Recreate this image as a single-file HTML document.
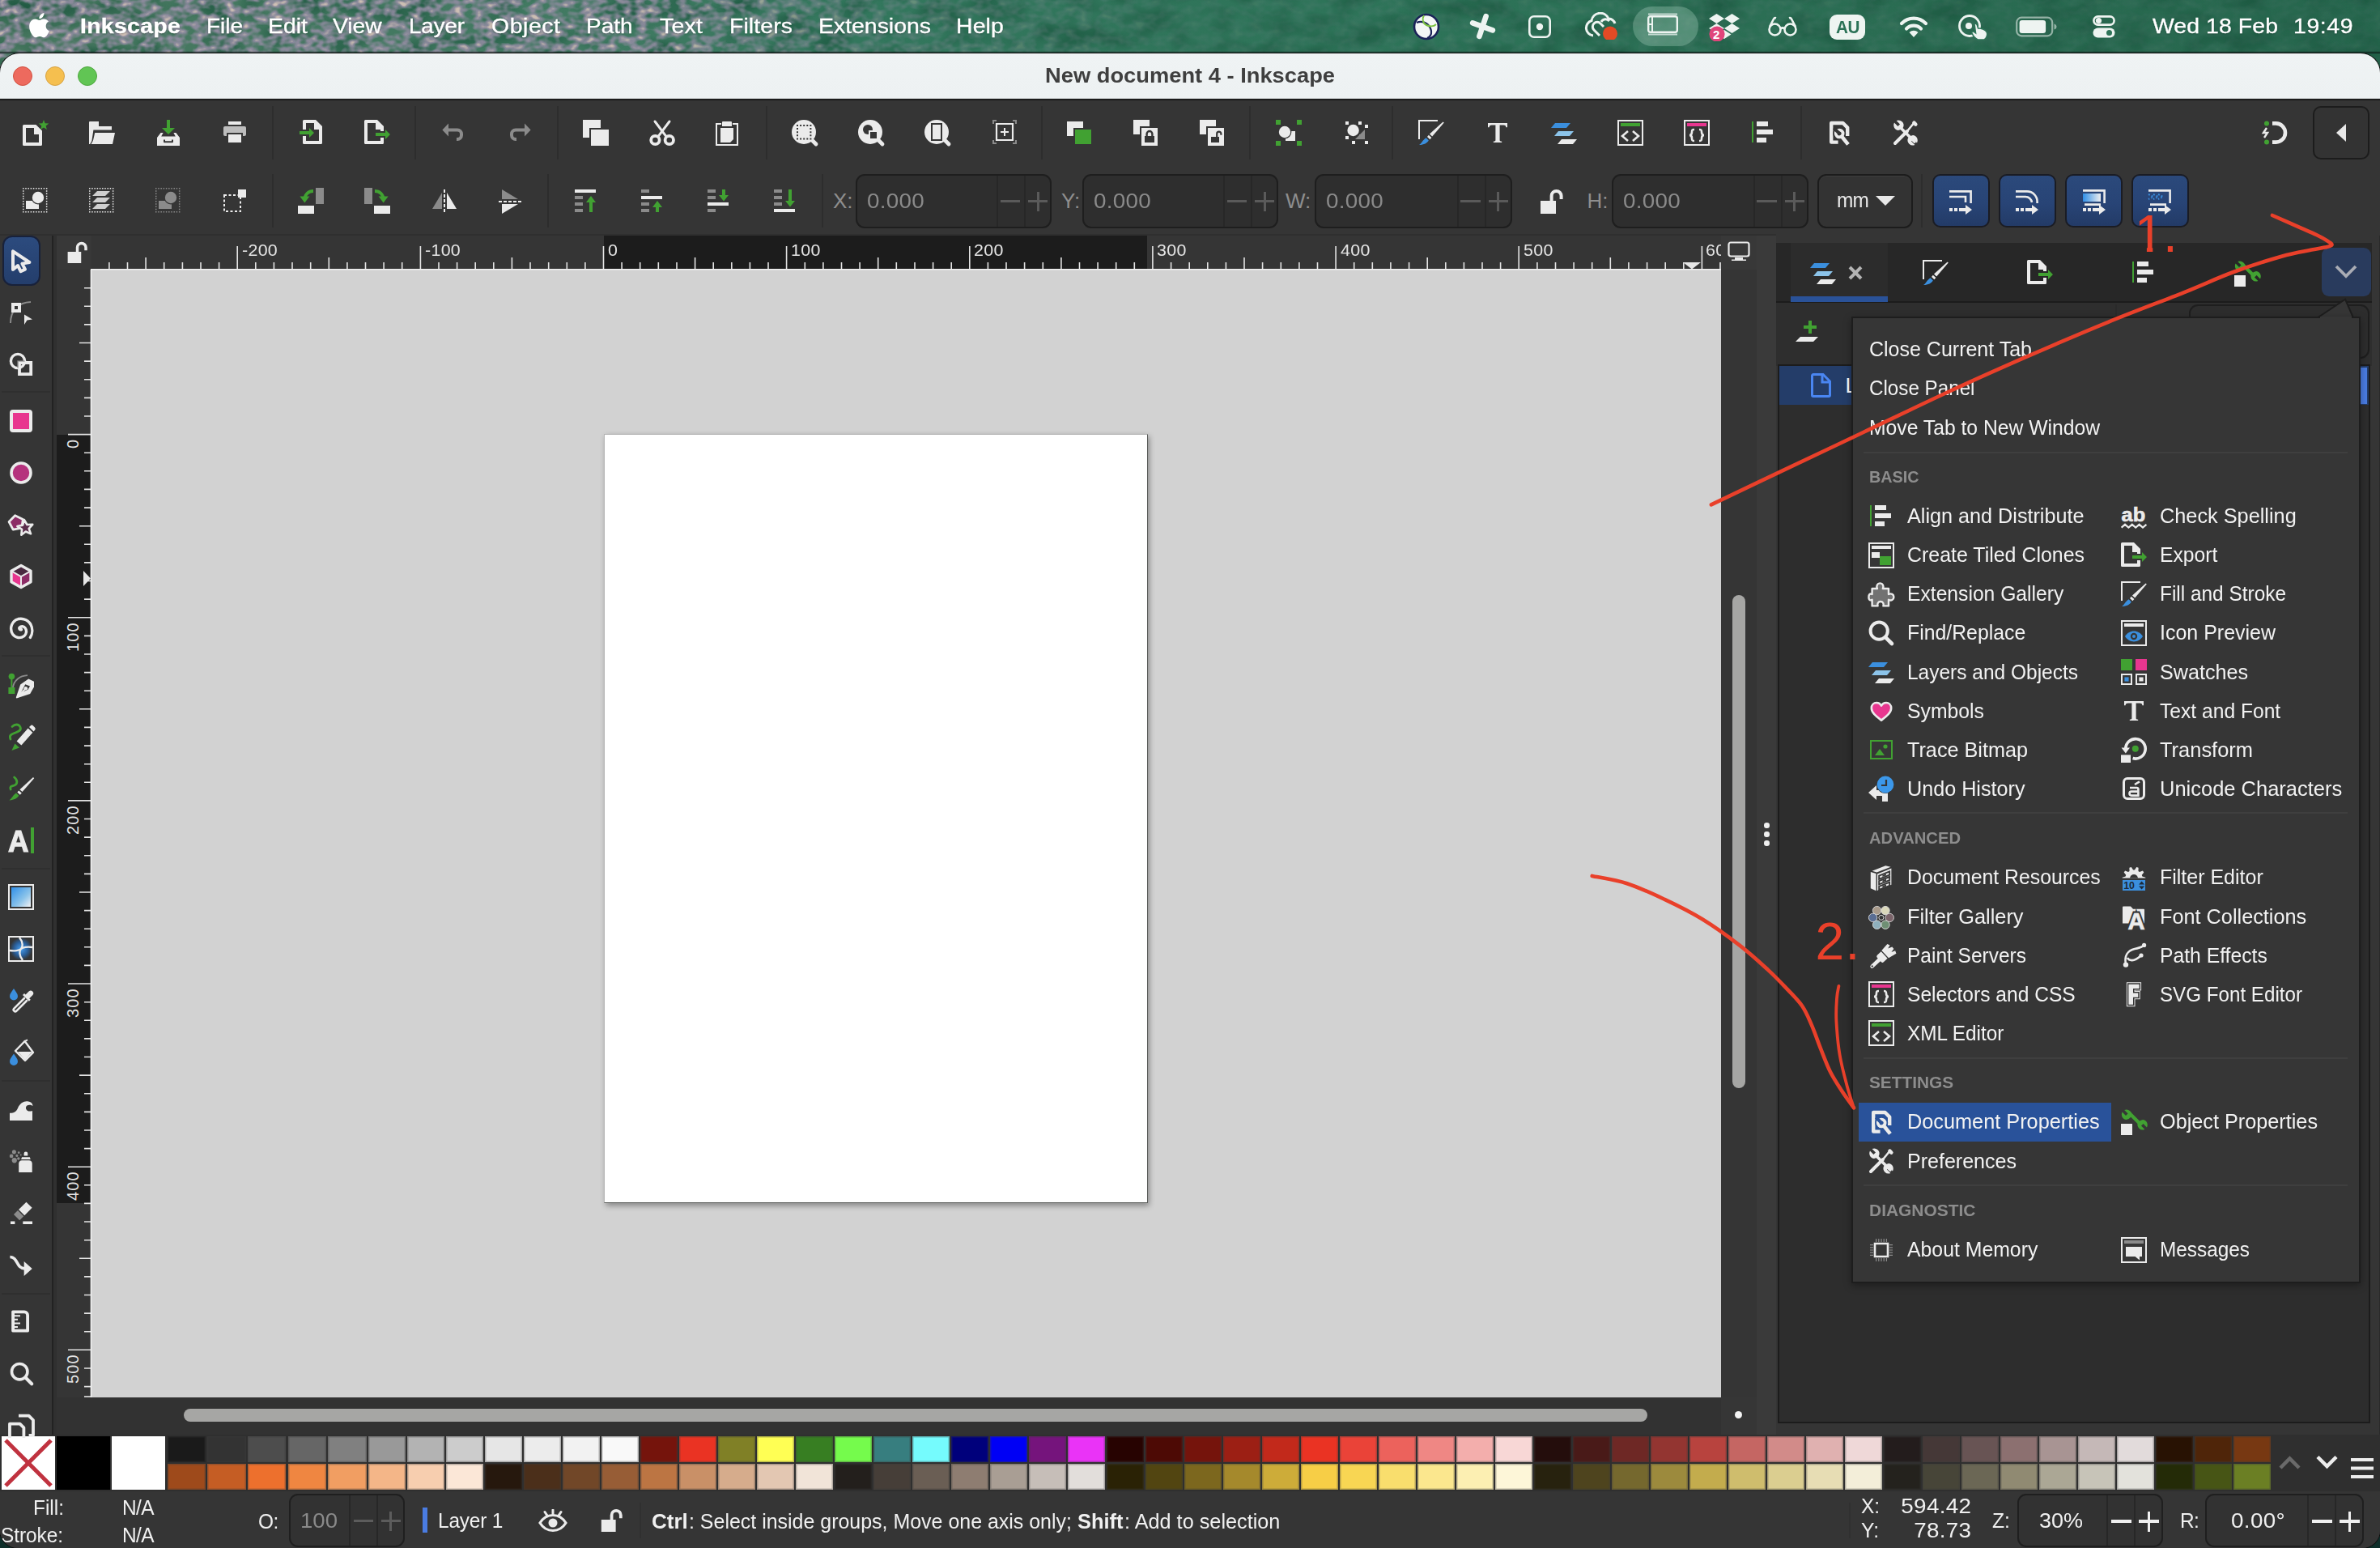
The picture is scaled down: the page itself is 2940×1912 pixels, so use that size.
<!DOCTYPE html>
<html lang="en"><head><meta charset="utf-8"><title>New document 4 - Inkscape</title>
<style>
html,body{margin:0;padding:0;background:#0e2f2a;}
body{width:2940px;height:1912px;overflow:hidden;font-family:"Liberation Sans", sans-serif;}
#root{position:absolute;left:0;top:0;width:2940px;height:1912px;overflow:hidden;}
#root div,#root span,#root svg{position:absolute;box-sizing:border-box;}
.t{white-space:pre;}
.sep{background:#2c2c2c;width:2px;}
.fld{background:#2e2e2e;border:2px solid #1e1e1e;border-radius:11px;}
.fld i{position:absolute;top:0;bottom:0;width:2px;background:#272727;}
</style></head><body>
<div id="root">
<svg width="2940" height="90" style="left:0;top:0" viewBox="0 0 2940 90"><defs><linearGradient id="wg" x1="0" x2="1" y1="0" y2="0"><stop offset="0" stop-color="#47775f"/><stop offset="0.25" stop-color="#417a62"/><stop offset="0.36" stop-color="#33775d"/><stop offset="0.6" stop-color="#2d7358"/><stop offset="0.8" stop-color="#2a6c52"/><stop offset="1" stop-color="#26664d"/></linearGradient><filter id="wn1" x="0" y="0" width="100%" height="100%" color-interpolation-filters="sRGB"><feTurbulence type="fractalNoise" baseFrequency="0.075 0.11" numOctaves="2" seed="11"/><feColorMatrix type="matrix" values="0 0 0 0 0.58  0 0 0 0 0.55  0 0 0 0 0.64  3.6 0 0 0 -1.27"/></filter><filter id="wn2" x="0" y="0" width="100%" height="100%" color-interpolation-filters="sRGB"><feTurbulence type="fractalNoise" baseFrequency="0.075 0.11" numOctaves="2" seed="11"/><feColorMatrix type="matrix" values="0 0 0 0 0.84  0 0 0 0 0.77  0 0 0 0 0.72  6 0 0 0 -3.95"/></filter><filter id="wn3" x="0" y="0" width="100%" height="100%" color-interpolation-filters="sRGB"><feTurbulence type="fractalNoise" baseFrequency="0.02 0.035" numOctaves="2" seed="5"/><feColorMatrix type="matrix" values="0 0 0 0 0.10  0 0 0 0 0.33  0 0 0 0 0.24  2.2 0 0 0 -0.9"/></filter><linearGradient id="wm" x1="0" x2="1"><stop offset="0" stop-color="#fff" stop-opacity="1"/><stop offset="0.27" stop-color="#fff" stop-opacity="0.95"/><stop offset="0.37" stop-color="#fff" stop-opacity="0.35"/><stop offset="0.5" stop-color="#fff" stop-opacity="0.1"/><stop offset="1" stop-color="#fff" stop-opacity="0.06"/></linearGradient><mask id="wmk"><rect width="2940" height="90" fill="url(#wm)"/></mask></defs><rect width="2940" height="90" fill="url(#wg)"/><rect width="2940" height="90" filter="url(#wn3)" opacity="0.8"/><g mask="url(#wmk)"><rect width="2940" height="90" filter="url(#wn1)" opacity="0.9"/><rect width="2940" height="90" filter="url(#wn2)" opacity="0.95"/></g></svg>
<div style="left:0.0px;top:63.0px;width:2940.0px;height:3.0px;background:linear-gradient(#0000,#0b1a16)"></div>
<span class="t " style="left:99.0px;top:15.0px;font-size:26.50px;line-height:34px;color:#fff;font-weight:700;letter-spacing:0.309px;transform:scaleX(1.0700);transform-origin:0 50%;text-shadow:0 1px 2px rgba(0,0,0,.3);-webkit-text-stroke:.35px #fff;">Inkscape</span>
<span class="t " style="left:254.5px;top:15.0px;font-size:26.50px;line-height:34px;color:#fff;letter-spacing:0.000px;transform:scaleX(1.0539);transform-origin:0 50%;text-shadow:0 1px 2px rgba(0,0,0,.3);-webkit-text-stroke:.35px #fff;">File</span>
<span class="t " style="left:331.0px;top:15.0px;font-size:26.50px;line-height:34px;color:#fff;letter-spacing:0.033px;transform:scaleX(1.0700);transform-origin:0 50%;text-shadow:0 1px 2px rgba(0,0,0,.3);-webkit-text-stroke:.35px #fff;">Edit</span>
<span class="t " style="left:411.0px;top:15.0px;font-size:26.50px;line-height:34px;color:#fff;letter-spacing:0.000px;transform:scaleX(1.0622);transform-origin:0 50%;text-shadow:0 1px 2px rgba(0,0,0,.3);-webkit-text-stroke:.35px #fff;">View</span>
<span class="t " style="left:505.0px;top:15.0px;font-size:26.50px;line-height:34px;color:#fff;letter-spacing:0.000px;transform:scaleX(1.0410);transform-origin:0 50%;text-shadow:0 1px 2px rgba(0,0,0,.3);-webkit-text-stroke:.35px #fff;">Layer</span>
<span class="t " style="left:607.0px;top:15.0px;font-size:26.50px;line-height:34px;color:#fff;letter-spacing:0.554px;transform:scaleX(1.0700);transform-origin:0 50%;text-shadow:0 1px 2px rgba(0,0,0,.3);-webkit-text-stroke:.35px #fff;">Object</span>
<span class="t " style="left:724.0px;top:15.0px;font-size:26.50px;line-height:34px;color:#fff;letter-spacing:-0.000px;transform:scaleX(1.0548);transform-origin:0 50%;text-shadow:0 1px 2px rgba(0,0,0,.3);-webkit-text-stroke:.35px #fff;">Path</span>
<span class="t " style="left:815.0px;top:15.0px;font-size:26.50px;line-height:34px;color:#fff;letter-spacing:0.234px;transform:scaleX(1.0700);transform-origin:0 50%;text-shadow:0 1px 2px rgba(0,0,0,.3);-webkit-text-stroke:.35px #fff;">Text</span>
<span class="t " style="left:901.0px;top:15.0px;font-size:26.50px;line-height:34px;color:#fff;letter-spacing:0.109px;transform:scaleX(1.0700);transform-origin:0 50%;text-shadow:0 1px 2px rgba(0,0,0,.3);-webkit-text-stroke:.35px #fff;">Filters</span>
<span class="t " style="left:1011.0px;top:15.0px;font-size:26.50px;line-height:34px;color:#fff;letter-spacing:0.028px;transform:scaleX(1.0700);transform-origin:0 50%;text-shadow:0 1px 2px rgba(0,0,0,.3);-webkit-text-stroke:.35px #fff;">Extensions</span>
<span class="t " style="left:1180.5px;top:15.0px;font-size:26.50px;line-height:34px;color:#fff;letter-spacing:0.160px;transform:scaleX(1.0700);transform-origin:0 50%;text-shadow:0 1px 2px rgba(0,0,0,.3);-webkit-text-stroke:.35px #fff;">Help</span>
<span class="t " style="left:2659.0px;top:15.0px;font-size:26.50px;line-height:34px;color:#fff;letter-spacing:0.100px;transform:scaleX(1.0700);transform-origin:0 50%;text-shadow:0 1px 2px rgba(0,0,0,.3);-webkit-text-stroke:.35px #fff;">Wed 18 Feb</span>
<span class="t " style="left:2832.5px;top:15.0px;font-size:26.50px;line-height:34px;color:#fff;letter-spacing:0.570px;transform:scaleX(1.0700);transform-origin:0 50%;text-shadow:0 1px 2px rgba(0,0,0,.3);-webkit-text-stroke:.35px #fff;">19:49</span>
<div id="win" style="left:0;top:66px;width:2940px;height:1846px;border-radius:24px 24px 22px 22px;background:#353535;overflow:hidden;box-shadow:0 0 0 1px #101010;">
</div>
<div id="w" style="left:0;top:66px;width:2940px;height:1846px;border-radius:24px 24px 22px 22px;overflow:hidden;">
<div id="wi" style="left:0;top:-66px;width:2940px;height:1912px;">
<div style="left:0.0px;top:65.0px;width:2940.0px;height:57.0px;background:linear-gradient(#eff3f4,#edf1f2);border-bottom:1px solid #d0d4d5;"></div>
<div style="left:0.0px;top:122.0px;width:2940.0px;height:2.0px;background:#1b1b1b"></div>
<div style="left:16.0px;top:82.0px;width:24.0px;height:24.0px;border-radius:50%;background:#ed6a5e;border:1px solid #d1503f;"></div>
<div style="left:56.0px;top:82.0px;width:24.0px;height:24.0px;border-radius:50%;background:#f5bf4f;border:1px solid #d6a243;"></div>
<div style="left:96.0px;top:82.0px;width:24.0px;height:24.0px;border-radius:50%;background:#61c554;border:1px solid #4fa73f;"></div>
<span class="t " style="left:1291.0px;top:77.0px;font-size:26.00px;line-height:33px;color:#3f3f3f;font-weight:700;letter-spacing:0.000px;transform:scaleX(1.0500);transform-origin:0 50%;">New document 4 - Inkscape</span>
<div style="left:336.0px;top:131.0px;width:2.0px;height:66.0px;background:#2d2d2d"></div>
<div style="left:512.0px;top:131.0px;width:2.0px;height:66.0px;background:#2d2d2d"></div>
<div style="left:688.0px;top:131.0px;width:2.0px;height:66.0px;background:#2d2d2d"></div>
<div style="left:946.0px;top:131.0px;width:2.0px;height:66.0px;background:#2d2d2d"></div>
<div style="left:1286.0px;top:131.0px;width:2.0px;height:66.0px;background:#2d2d2d"></div>
<div style="left:1543.0px;top:131.0px;width:2.0px;height:66.0px;background:#2d2d2d"></div>
<div style="left:1719.0px;top:131.0px;width:2.0px;height:66.0px;background:#2d2d2d"></div>
<div style="left:2224.0px;top:131.0px;width:2.0px;height:66.0px;background:#2d2d2d"></div>
<div style="left:336.0px;top:215.0px;width:2.0px;height:66.0px;background:#2d2d2d"></div>
<div style="left:676.0px;top:215.0px;width:2.0px;height:66.0px;background:#2d2d2d"></div>
<div style="left:1015.0px;top:215.0px;width:2.0px;height:66.0px;background:#2d2d2d"></div>
<div style="left:2373.0px;top:215.0px;width:2.0px;height:66.0px;background:#2d2d2d"></div>
<span class="t " style="left:1029.0px;top:231.5px;font-size:26.00px;line-height:33px;color:#8e8e8e;">X:</span>
<div style="left:1057.0px;top:214.5px;width:242.0px;height:67.0px;"></div>
<div class="fld" style="left:1057.0px;top:214.5px;width:242.0px;height:67px;"><i style="left:172.0px"></i><i style="left:206.0px"></i></div>
<span class="t " style="left:1071.0px;top:231.5px;font-size:26.00px;line-height:33px;color:#8a8a8a;letter-spacing:0.260px;transform:scaleX(1.0700);transform-origin:0 50%;">0.000</span>
<div style="left:1235.5px;top:247.0px;width:24.5px;height:3.0px;background:#5a5a5a"></div>
<div style="left:1270.0px;top:247.0px;width:24.0px;height:3.0px;background:#5a5a5a"></div>
<div style="left:1280.5px;top:236.5px;width:3.0px;height:24.0px;background:#5a5a5a"></div>
<span class="t " style="left:1311.0px;top:231.5px;font-size:26.00px;line-height:33px;color:#8e8e8e;">Y:</span>
<div style="left:1337.0px;top:214.5px;width:242.0px;height:67.0px;"></div>
<div class="fld" style="left:1337.0px;top:214.5px;width:242.0px;height:67px;"><i style="left:172.0px"></i><i style="left:206.0px"></i></div>
<span class="t " style="left:1351.0px;top:231.5px;font-size:26.00px;line-height:33px;color:#8a8a8a;letter-spacing:0.260px;transform:scaleX(1.0700);transform-origin:0 50%;">0.000</span>
<div style="left:1515.5px;top:247.0px;width:24.5px;height:3.0px;background:#5a5a5a"></div>
<div style="left:1550.0px;top:247.0px;width:24.0px;height:3.0px;background:#5a5a5a"></div>
<div style="left:1560.5px;top:236.5px;width:3.0px;height:24.0px;background:#5a5a5a"></div>
<span class="t " style="left:1588.0px;top:231.5px;font-size:26.00px;line-height:33px;color:#8e8e8e;">W:</span>
<div style="left:1624.0px;top:214.5px;width:243.5px;height:67.0px;"></div>
<div class="fld" style="left:1624.0px;top:214.5px;width:243.5px;height:67px;"><i style="left:173.5px"></i><i style="left:207.5px"></i></div>
<span class="t " style="left:1638.0px;top:231.5px;font-size:26.00px;line-height:33px;color:#8a8a8a;letter-spacing:0.260px;transform:scaleX(1.0700);transform-origin:0 50%;">0.000</span>
<div style="left:1804.0px;top:247.0px;width:24.5px;height:3.0px;background:#5a5a5a"></div>
<div style="left:1838.5px;top:247.0px;width:24.0px;height:3.0px;background:#5a5a5a"></div>
<div style="left:1849.0px;top:236.5px;width:3.0px;height:24.0px;background:#5a5a5a"></div>
<span class="t " style="left:1960.5px;top:231.5px;font-size:26.00px;line-height:33px;color:#8e8e8e;">H:</span>
<div style="left:1990.5px;top:214.5px;width:243.0px;height:67.0px;"></div>
<div class="fld" style="left:1990.5px;top:214.5px;width:243.0px;height:67px;"><i style="left:173.0px"></i><i style="left:207.0px"></i></div>
<span class="t " style="left:2004.5px;top:231.5px;font-size:26.00px;line-height:33px;color:#8a8a8a;letter-spacing:0.260px;transform:scaleX(1.0700);transform-origin:0 50%;">0.000</span>
<div style="left:2170.0px;top:247.0px;width:24.5px;height:3.0px;background:#5a5a5a"></div>
<div style="left:2204.5px;top:247.0px;width:24.0px;height:3.0px;background:#5a5a5a"></div>
<div style="left:2215.0px;top:236.5px;width:3.0px;height:24.0px;background:#5a5a5a"></div>
<div style="left:2245px;top:214.5px;width:118px;height:67px;background:#333;border:2px solid #1c1c1c;border-radius:11px;box-shadow:inset 0 1px 0 #3d3d3d;"></div>
<span class="t " style="left:2268.5px;top:230.5px;font-size:26.00px;line-height:33px;color:#e8e8e8;letter-spacing:-0.913px;transform:scaleX(0.9400);transform-origin:0 50%;">mm</span>
<svg width="26" height="14" style="left:2316px;top:241px" viewBox="0 0 26 14"><path d="M1 1h24L13 13z" fill="#e8e8e8"/></svg>
<div style="left:2386.5px;top:215px;width:71px;height:66px;border-radius:10px;background:linear-gradient(#2b497b,#284476 55%,#233b67);border:2px solid #1a1c24;"></div>
<div style="left:2468.5px;top:215px;width:71px;height:66px;border-radius:10px;background:linear-gradient(#2b497b,#284476 55%,#233b67);border:2px solid #1a1c24;"></div>
<div style="left:2551.0px;top:215px;width:71px;height:66px;border-radius:10px;background:linear-gradient(#2b497b,#284476 55%,#233b67);border:2px solid #1a1c24;"></div>
<div style="left:2632.5px;top:215px;width:71px;height:66px;border-radius:10px;background:linear-gradient(#2b497b,#284476 55%,#233b67);border:2px solid #1a1c24;"></div>
<div style="left:2857px;top:131px;width:70px;height:66px;border-radius:10px;background:#333;border:2px solid #1c1c1c;"></div>
<svg width="14" height="24" style="left:2885px;top:152px" viewBox="0 0 14 24"><path d="M13 1v22L1 12z" fill="#e8e8e8"/></svg>
<div style="left:64.0px;top:291.0px;width:2.0px;height:1485.0px;background:#222"></div>
<div style="left:66.0px;top:291.0px;width:4.0px;height:1485.0px;background:#303030"></div>
<div style="left:2.0px;top:483.0px;width:60.0px;height:2.0px;background:#2f2f2f"></div>
<div style="left:2.0px;top:809.0px;width:60.0px;height:2.0px;background:#2f2f2f"></div>
<div style="left:2.0px;top:1072.0px;width:60.0px;height:2.0px;background:#2f2f2f"></div>
<div style="left:2.0px;top:1334.0px;width:60.0px;height:2.0px;background:#2f2f2f"></div>
<div style="left:2.0px;top:1597.0px;width:60.0px;height:2.0px;background:#2f2f2f"></div>
<div style="left:3px;top:290.500px;width:46.500px;height:62.500px;border-radius:12px;background:linear-gradient(#2c4b7e,#243e6c);border:2px solid #18213a;"></div>
<div style="left:70.0px;top:291.0px;width:2056.0px;height:42.0px;background:#353535"></div>
<div style="left:70.0px;top:291.0px;width:43.0px;height:42.0px;background:#383838"></div>
<div style="left:0.0px;top:289.0px;width:2194.0px;height:2.0px;background:#2f2f2f"></div>
<div style="left:745.5px;top:291.0px;width:671.7px;height:42.0px;background:#1c1c1c"></div>
<div style="left:70.0px;top:333.0px;width:43.0px;height:1393.0px;background:#353535"></div>
<div style="left:70.0px;top:536.6px;width:43.0px;height:949.8px;background:#1c1c1c"></div>
<div style="left:113.0px;top:333.0px;width:2013.0px;height:1393.0px;background:#d2d2d2"></div>
<svg width="2940" height="1912" style="left:0;top:0" viewBox="0 0 2940 1912"><g stroke="#e4e4e4" stroke-width="1.6" fill="none"><path d="M134.9 324V333M157.5 324V333M180.1 318V333M202.7 324V333M225.4 324V333M248.0 324V333M270.6 324V333M293.2 304V333M315.8 324V333M338.4 324V333M361.0 324V333M383.7 324V333M406.3 318V333M428.9 324V333M451.5 324V333M474.1 324V333M496.7 324V333M519.4 304V333M542.0 324V333M564.6 324V333M587.2 324V333M609.8 324V333M632.4 318V333M655.0 324V333M677.7 324V333M700.3 324V333M722.9 324V333M745.5 304V333M768.1 324V333M790.7 324V333M813.3 324V333M836.0 324V333M858.6 318V333M881.2 324V333M903.8 324V333M926.4 324V333M949.0 324V333M971.6 304V333M994.3 324V333M1016.9 324V333M1039.5 324V333M1062.1 324V333M1084.7 318V333M1107.3 324V333M1130.0 324V333M1152.6 324V333M1175.2 324V333M1197.8 304V333M1220.4 324V333M1243.0 324V333M1265.6 324V333M1288.3 324V333M1310.9 318V333M1333.5 324V333M1356.1 324V333M1378.7 324V333M1401.3 324V333M1423.9 304V333M1446.6 324V333M1469.2 324V333M1491.8 324V333M1514.4 324V333M1537.0 318V333M1559.6 324V333M1582.3 324V333M1604.9 324V333M1627.5 324V333M1650.1 304V333M1672.7 324V333M1695.3 324V333M1717.9 324V333M1740.6 324V333M1763.2 318V333M1785.8 324V333M1808.4 324V333M1831.0 324V333M1853.6 324V333M1876.2 304V333M1898.9 324V333M1921.5 324V333M1944.1 324V333M1966.7 324V333M1989.3 318V333M2011.9 324V333M2034.6 324V333M2057.2 324V333M2079.8 324V333M2102.4 304V333M104 355.7H113M104 378.3H113M104 400.9H113M98 423.5H113M104 446.1H113M104 468.8H113M104 491.4H113M104 514.0H113M84 536.6H113M104 559.2H113M104 581.8H113M104 604.4H113M104 627.1H113M98 649.7H113M104 672.3H113M104 694.9H113M104 717.5H113M104 740.1H113M84 762.8H113M104 785.4H113M104 808.0H113M104 830.6H113M104 853.2H113M98 875.8H113M104 898.4H113M104 921.1H113M104 943.7H113M104 966.3H113M84 988.9H113M104 1011.5H113M104 1034.1H113M104 1056.7H113M104 1079.4H113M98 1102.0H113M104 1124.6H113M104 1147.2H113M104 1169.8H113M104 1192.4H113M84 1215.0H113M104 1237.7H113M104 1260.3H113M104 1282.9H113M104 1305.5H113M98 1328.1H113M104 1350.7H113M104 1373.4H113M104 1396.0H113M104 1418.6H113M84 1441.2H113M104 1463.8H113M104 1486.4H113M104 1509.0H113M104 1531.7H113M98 1554.3H113M104 1576.9H113M104 1599.5H113M104 1622.1H113M104 1644.7H113M84 1667.3H113M104 1690.0H113M104 1712.6H113"/></g><path d="M112.5 333V1726M112 332.700H2126M2125 324V333M104 1725H113" stroke="#f0f0f0" stroke-width="1.600" fill="none"/><path d="M2079 324h22l-11 8.500z" fill="#e6e6e6"/><path d="M103 705v19l9 -9.500z" fill="#e6e6e6"/></svg>
<span class="t " style="left:298.7px;top:295.7px;font-size:20.00px;line-height:26px;color:#e4e4e4;letter-spacing:0.281px;transform:scaleX(1.0700);transform-origin:0 50%;">-200</span>
<span class="t " style="left:524.9px;top:295.7px;font-size:20.00px;line-height:26px;color:#e4e4e4;letter-spacing:0.281px;transform:scaleX(1.0700);transform-origin:0 50%;">-100</span>
<span class="t " style="left:751.0px;top:295.7px;font-size:20.00px;line-height:26px;color:#e4e4e4;letter-spacing:0.312px;transform:scaleX(1.0700);transform-origin:0 50%;">0</span>
<span class="t " style="left:977.1px;top:295.7px;font-size:20.00px;line-height:26px;color:#e4e4e4;letter-spacing:0.312px;transform:scaleX(1.0700);transform-origin:0 50%;">100</span>
<span class="t " style="left:1203.3px;top:295.7px;font-size:20.00px;line-height:26px;color:#e4e4e4;letter-spacing:0.312px;transform:scaleX(1.0700);transform-origin:0 50%;">200</span>
<span class="t " style="left:1429.4px;top:295.7px;font-size:20.00px;line-height:26px;color:#e4e4e4;letter-spacing:0.312px;transform:scaleX(1.0700);transform-origin:0 50%;">300</span>
<span class="t " style="left:1655.6px;top:295.7px;font-size:20.00px;line-height:26px;color:#e4e4e4;letter-spacing:0.312px;transform:scaleX(1.0700);transform-origin:0 50%;">400</span>
<span class="t " style="left:1881.8px;top:295.7px;font-size:20.00px;line-height:26px;color:#e4e4e4;letter-spacing:0.312px;transform:scaleX(1.0700);transform-origin:0 50%;">500</span>
<div style="left:2107.4px;top:291px;width:18.6px;height:40px;overflow:hidden;">
<span class="t " style="left:0.0px;top:4.7px;font-size:20.00px;line-height:26px;color:#e4e4e4;letter-spacing:0.312px;transform:scaleX(1.0700);transform-origin:0 50%;">600</span>
</div>
<span class="t" style="left:77.5px;top:553.8px;font-size:20px;line-height:24px;color:#e4e4e4;transform-origin:0 0;transform:rotate(-90deg);letter-spacing:1.11px">0</span>
<span class="t" style="left:77.5px;top:804.5px;font-size:20px;line-height:24px;color:#e4e4e4;transform-origin:0 0;transform:rotate(-90deg);letter-spacing:1.11px">100</span>
<span class="t" style="left:77.5px;top:1030.6px;font-size:20px;line-height:24px;color:#e4e4e4;transform-origin:0 0;transform:rotate(-90deg);letter-spacing:1.11px">200</span>
<span class="t" style="left:77.5px;top:1256.8px;font-size:20px;line-height:24px;color:#e4e4e4;transform-origin:0 0;transform:rotate(-90deg);letter-spacing:1.11px">300</span>
<span class="t" style="left:77.5px;top:1482.9px;font-size:20px;line-height:24px;color:#e4e4e4;transform-origin:0 0;transform:rotate(-90deg);letter-spacing:1.11px">400</span>
<span class="t" style="left:77.5px;top:1709.1px;font-size:20px;line-height:24px;color:#e4e4e4;transform-origin:0 0;transform:rotate(-90deg);letter-spacing:1.11px">500</span>
<div style="left:746.2px;top:536.2px;width:671.6px;height:949.7px;background:#fff;box-shadow:1.500px 3px 7px rgba(0,0,0,.38);border-style:solid;border-color:#b4b4b4 #5c5e5c #5c5e5c #b4b4b4;border-width:1.800px 1.400px 1.400px 1.800px;"></div>
<div style="left:2126.0px;top:291.0px;width:44.0px;height:1485.0px;background:#353535"></div>
<div style="left:2126.0px;top:291.0px;width:44.0px;height:42.0px;background:#383838"></div>
<div style="left:2140.0px;top:735.0px;width:16.0px;height:609.0px;background:#a6a6a4;border-radius:8px"></div>
<div style="left:70.0px;top:1726.0px;width:2100.0px;height:50.0px;background:#323232"></div>
<div style="left:227.0px;top:1740.0px;width:1808.0px;height:16.0px;background:#a6a6a4;border-radius:8px"></div>
<div style="left:2126.0px;top:1726.0px;width:44.0px;height:50.0px;background:#363636"></div>
<div style="left:2143.0px;top:1743.0px;width:9.0px;height:9.0px;background:#f4f4f4;border-radius:50%"></div>
<div style="left:2170.0px;top:291.0px;width:24.0px;height:1485.0px;background:#3a3a3a"></div>
<div style="left:2179.0px;top:1016.0px;width:6.5px;height:6.5px;background:#f0f0f0;border-radius:50%"></div>
<div style="left:2179.0px;top:1027.0px;width:6.5px;height:6.5px;background:#f0f0f0;border-radius:50%"></div>
<div style="left:2179.0px;top:1038.0px;width:6.5px;height:6.5px;background:#f0f0f0;border-radius:50%"></div>
<div style="left:2194.0px;top:291.0px;width:746.0px;height:1485.0px;background:#353535"></div>
<div style="left:2194.0px;top:300.0px;width:736.0px;height:73.0px;background:#272727"></div>
<div style="left:2194.0px;top:372.0px;width:736.0px;height:2.0px;background:#1c1c1c"></div>
<div style="left:2212.0px;top:300.0px;width:120.0px;height:66.0px;background:#2c2c2c"></div>
<div style="left:2212.0px;top:366.0px;width:120.0px;height:7.0px;background:#2a5298"></div>
<div style="left:2194.0px;top:374.0px;width:736.0px;height:78.0px;background:#2e2e2e"></div>
<div style="left:2613.0px;top:376.0px;width:2.0px;height:72.0px;background:#2a2a2a"></div>
<div style="left:2704px;top:376px;width:223px;height:67px;background:#2d2d2d;border:2px solid #1e1e1e;border-radius:11px;"></div>
<div style="left:2196px;top:450px;width:732px;height:1308px;background:#2d2d2d;border:2px solid #1c1c1c;"></div>
<div style="left:2198.0px;top:452.0px;width:728.0px;height:48.0px;background:#243d69"></div>
<div style="left:2916.0px;top:454.0px;width:8.0px;height:44.5px;background:#4a7ce2"></div>
<span class="t " style="left:2279.5px;top:460.0px;font-size:26.00px;line-height:33px;color:#fff;">Layer 1</span>
<div style="left:2867.5px;top:306px;width:61px;height:60px;border-radius:9px;background:#293b5d;"></div>
<svg width="28" height="18" style="left:2884px;top:327px" viewBox="0 0 28 18"><path d="M2 2l12 12L26 2" stroke="#a9acb4" stroke-width="3.800" fill="none"/></svg>
<div style="left:2938.6px;top:291.0px;width:1.4px;height:1481.0px;background:#2a2a2a"></div>
<div style="left:0.0px;top:1772.0px;width:2940.0px;height:70.0px;background:#2f2f2f"></div>
<svg width="66" height="66" style="left:2px;top:1774px" viewBox="0 0 66 66"><rect width="66" height="66" fill="#fff"/><path d="M5 5L61 61M61 5L5 61" stroke="#c0323f" stroke-width="5"/></svg>
<div style="left:70.0px;top:1774.0px;width:66.0px;height:66.0px;background:#000"></div>
<div style="left:138.0px;top:1774.0px;width:66.0px;height:66.0px;background:#fff"></div>
<div style="left:206.7px;top:1774.0px;width:47.6px;height:32.0px;background:#1a1a1a;box-shadow:inset 0 0 0 1.5px rgba(60,60,60,.35)"></div>
<div style="left:206.7px;top:1808.0px;width:47.6px;height:32.0px;background:#9e4a1b;box-shadow:inset 0 0 0 1.5px rgba(60,60,60,.35)"></div>
<div style="left:256.3px;top:1774.0px;width:47.6px;height:32.0px;background:#333333;box-shadow:inset 0 0 0 1.5px rgba(60,60,60,.35)"></div>
<div style="left:256.3px;top:1808.0px;width:47.6px;height:32.0px;background:#c55d24;box-shadow:inset 0 0 0 1.5px rgba(60,60,60,.35)"></div>
<div style="left:305.9px;top:1774.0px;width:47.6px;height:32.0px;background:#4d4d4d;box-shadow:inset 0 0 0 1.5px rgba(60,60,60,.35)"></div>
<div style="left:305.9px;top:1808.0px;width:47.6px;height:32.0px;background:#ed702d;box-shadow:inset 0 0 0 1.5px rgba(60,60,60,.35)"></div>
<div style="left:355.5px;top:1774.0px;width:47.6px;height:32.0px;background:#666666;box-shadow:inset 0 0 0 1.5px rgba(60,60,60,.35)"></div>
<div style="left:355.5px;top:1808.0px;width:47.6px;height:32.0px;background:#ef8641;box-shadow:inset 0 0 0 1.5px rgba(60,60,60,.35)"></div>
<div style="left:405.1px;top:1774.0px;width:47.6px;height:32.0px;background:#808080;box-shadow:inset 0 0 0 1.5px rgba(60,60,60,.35)"></div>
<div style="left:405.1px;top:1808.0px;width:47.6px;height:32.0px;background:#f19e62;box-shadow:inset 0 0 0 1.5px rgba(60,60,60,.35)"></div>
<div style="left:454.7px;top:1774.0px;width:46.0px;height:32.0px;background:#999999;box-shadow:inset 0 0 0 1.5px rgba(60,60,60,.35)"></div>
<div style="left:454.7px;top:1808.0px;width:46.0px;height:32.0px;background:#f4b688;box-shadow:inset 0 0 0 1.5px rgba(60,60,60,.35)"></div>
<div style="left:502.7px;top:1774.0px;width:46.0px;height:32.0px;background:#b3b3b3;box-shadow:inset 0 0 0 1.5px rgba(60,60,60,.35)"></div>
<div style="left:502.7px;top:1808.0px;width:46.0px;height:32.0px;background:#f7ceaf;box-shadow:inset 0 0 0 1.5px rgba(60,60,60,.35)"></div>
<div style="left:550.7px;top:1774.0px;width:46.0px;height:32.0px;background:#cccccc;box-shadow:inset 0 0 0 1.5px rgba(60,60,60,.35)"></div>
<div style="left:550.7px;top:1808.0px;width:46.0px;height:32.0px;background:#fbe7d7;box-shadow:inset 0 0 0 1.5px rgba(60,60,60,.35)"></div>
<div style="left:598.7px;top:1774.0px;width:46.0px;height:32.0px;background:#e6e6e6;box-shadow:inset 0 0 0 1.5px rgba(60,60,60,.35)"></div>
<div style="left:598.7px;top:1808.0px;width:46.0px;height:32.0px;background:#26180d;box-shadow:inset 0 0 0 1.5px rgba(60,60,60,.35)"></div>
<div style="left:646.7px;top:1774.0px;width:46.0px;height:32.0px;background:#ececec;box-shadow:inset 0 0 0 1.5px rgba(60,60,60,.35)"></div>
<div style="left:646.7px;top:1808.0px;width:46.0px;height:32.0px;background:#4b2f1a;box-shadow:inset 0 0 0 1.5px rgba(60,60,60,.35)"></div>
<div style="left:694.7px;top:1774.0px;width:46.0px;height:32.0px;background:#f2f2f2;box-shadow:inset 0 0 0 1.5px rgba(60,60,60,.35)"></div>
<div style="left:694.7px;top:1808.0px;width:46.0px;height:32.0px;background:#714728;box-shadow:inset 0 0 0 1.5px rgba(60,60,60,.35)"></div>
<div style="left:742.7px;top:1774.0px;width:46.0px;height:32.0px;background:#f9f9f9;box-shadow:inset 0 0 0 1.5px rgba(60,60,60,.35)"></div>
<div style="left:742.7px;top:1808.0px;width:46.0px;height:32.0px;background:#975d36;box-shadow:inset 0 0 0 1.5px rgba(60,60,60,.35)"></div>
<div style="left:790.7px;top:1774.0px;width:46.0px;height:32.0px;background:#75140c;box-shadow:inset 0 0 0 1.5px rgba(60,60,60,.35)"></div>
<div style="left:790.7px;top:1808.0px;width:46.0px;height:32.0px;background:#bc7543;box-shadow:inset 0 0 0 1.5px rgba(60,60,60,.35)"></div>
<div style="left:838.7px;top:1774.0px;width:46.0px;height:32.0px;background:#ea3323;box-shadow:inset 0 0 0 1.5px rgba(60,60,60,.35)"></div>
<div style="left:838.7px;top:1808.0px;width:46.0px;height:32.0px;background:#c99067;box-shadow:inset 0 0 0 1.5px rgba(60,60,60,.35)"></div>
<div style="left:886.7px;top:1774.0px;width:46.0px;height:32.0px;background:#808026;box-shadow:inset 0 0 0 1.5px rgba(60,60,60,.35)"></div>
<div style="left:886.7px;top:1808.0px;width:46.0px;height:32.0px;background:#d6ac8c;box-shadow:inset 0 0 0 1.5px rgba(60,60,60,.35)"></div>
<div style="left:934.7px;top:1774.0px;width:46.0px;height:32.0px;background:#ffff54;box-shadow:inset 0 0 0 1.5px rgba(60,60,60,.35)"></div>
<div style="left:934.7px;top:1808.0px;width:46.0px;height:32.0px;background:#e3c7b2;box-shadow:inset 0 0 0 1.5px rgba(60,60,60,.35)"></div>
<div style="left:982.7px;top:1774.0px;width:46.0px;height:32.0px;background:#377e22;box-shadow:inset 0 0 0 1.5px rgba(60,60,60,.35)"></div>
<div style="left:982.7px;top:1808.0px;width:46.0px;height:32.0px;background:#f1e4d8;box-shadow:inset 0 0 0 1.5px rgba(60,60,60,.35)"></div>
<div style="left:1030.7px;top:1774.0px;width:46.0px;height:32.0px;background:#75fb4c;box-shadow:inset 0 0 0 1.5px rgba(60,60,60,.35)"></div>
<div style="left:1030.7px;top:1808.0px;width:46.0px;height:32.0px;background:#231f1c;box-shadow:inset 0 0 0 1.5px rgba(60,60,60,.35)"></div>
<div style="left:1078.7px;top:1774.0px;width:46.0px;height:32.0px;background:#377e7f;box-shadow:inset 0 0 0 1.5px rgba(60,60,60,.35)"></div>
<div style="left:1078.7px;top:1808.0px;width:46.0px;height:32.0px;background:#463e38;box-shadow:inset 0 0 0 1.5px rgba(60,60,60,.35)"></div>
<div style="left:1126.7px;top:1774.0px;width:46.0px;height:32.0px;background:#75fbfd;box-shadow:inset 0 0 0 1.5px rgba(60,60,60,.35)"></div>
<div style="left:1126.7px;top:1808.0px;width:46.0px;height:32.0px;background:#6a5e54;box-shadow:inset 0 0 0 1.5px rgba(60,60,60,.35)"></div>
<div style="left:1174.7px;top:1774.0px;width:46.0px;height:32.0px;background:#00007b;box-shadow:inset 0 0 0 1.5px rgba(60,60,60,.35)"></div>
<div style="left:1174.7px;top:1808.0px;width:46.0px;height:32.0px;background:#8e7d71;box-shadow:inset 0 0 0 1.5px rgba(60,60,60,.35)"></div>
<div style="left:1222.7px;top:1774.0px;width:46.0px;height:32.0px;background:#0000f5;box-shadow:inset 0 0 0 1.5px rgba(60,60,60,.35)"></div>
<div style="left:1222.7px;top:1808.0px;width:46.0px;height:32.0px;background:#a99e94;box-shadow:inset 0 0 0 1.5px rgba(60,60,60,.35)"></div>
<div style="left:1270.7px;top:1774.0px;width:46.0px;height:32.0px;background:#75147c;box-shadow:inset 0 0 0 1.5px rgba(60,60,60,.35)"></div>
<div style="left:1270.7px;top:1808.0px;width:46.0px;height:32.0px;background:#c6beb8;box-shadow:inset 0 0 0 1.5px rgba(60,60,60,.35)"></div>
<div style="left:1318.7px;top:1774.0px;width:46.0px;height:32.0px;background:#ea33f7;box-shadow:inset 0 0 0 1.5px rgba(60,60,60,.35)"></div>
<div style="left:1318.7px;top:1808.0px;width:46.0px;height:32.0px;background:#e2dedb;box-shadow:inset 0 0 0 1.5px rgba(60,60,60,.35)"></div>
<div style="left:1366.7px;top:1774.0px;width:46.0px;height:32.0px;background:#270301;box-shadow:inset 0 0 0 1.5px rgba(60,60,60,.35)"></div>
<div style="left:1366.7px;top:1808.0px;width:46.0px;height:32.0px;background:#2a2205;box-shadow:inset 0 0 0 1.5px rgba(60,60,60,.35)"></div>
<div style="left:1414.7px;top:1774.0px;width:46.0px;height:32.0px;background:#4d0a05;box-shadow:inset 0 0 0 1.5px rgba(60,60,60,.35)"></div>
<div style="left:1414.7px;top:1808.0px;width:46.0px;height:32.0px;background:#524511;box-shadow:inset 0 0 0 1.5px rgba(60,60,60,.35)"></div>
<div style="left:1462.7px;top:1774.0px;width:46.0px;height:32.0px;background:#75140c;box-shadow:inset 0 0 0 1.5px rgba(60,60,60,.35)"></div>
<div style="left:1462.7px;top:1808.0px;width:46.0px;height:32.0px;background:#7c671e;box-shadow:inset 0 0 0 1.5px rgba(60,60,60,.35)"></div>
<div style="left:1510.7px;top:1774.0px;width:46.0px;height:32.0px;background:#9c1f14;box-shadow:inset 0 0 0 1.5px rgba(60,60,60,.35)"></div>
<div style="left:1510.7px;top:1808.0px;width:46.0px;height:32.0px;background:#a5892c;box-shadow:inset 0 0 0 1.5px rgba(60,60,60,.35)"></div>
<div style="left:1558.7px;top:1774.0px;width:46.0px;height:32.0px;background:#c2291b;box-shadow:inset 0 0 0 1.5px rgba(60,60,60,.35)"></div>
<div style="left:1558.7px;top:1808.0px;width:46.0px;height:32.0px;background:#cdac39;box-shadow:inset 0 0 0 1.5px rgba(60,60,60,.35)"></div>
<div style="left:1606.7px;top:1774.0px;width:46.0px;height:32.0px;background:#ea3323;box-shadow:inset 0 0 0 1.5px rgba(60,60,60,.35)"></div>
<div style="left:1606.7px;top:1808.0px;width:46.0px;height:32.0px;background:#f7ce46;box-shadow:inset 0 0 0 1.5px rgba(60,60,60,.35)"></div>
<div style="left:1654.7px;top:1774.0px;width:46.0px;height:32.0px;background:#ea4338;box-shadow:inset 0 0 0 1.5px rgba(60,60,60,.35)"></div>
<div style="left:1654.7px;top:1808.0px;width:46.0px;height:32.0px;background:#f8d653;box-shadow:inset 0 0 0 1.5px rgba(60,60,60,.35)"></div>
<div style="left:1702.7px;top:1774.0px;width:46.0px;height:32.0px;background:#ec625c;box-shadow:inset 0 0 0 1.5px rgba(60,60,60,.35)"></div>
<div style="left:1702.7px;top:1808.0px;width:46.0px;height:32.0px;background:#f9de6d;box-shadow:inset 0 0 0 1.5px rgba(60,60,60,.35)"></div>
<div style="left:1750.7px;top:1774.0px;width:46.0px;height:32.0px;background:#ef8784;box-shadow:inset 0 0 0 1.5px rgba(60,60,60,.35)"></div>
<div style="left:1750.7px;top:1808.0px;width:46.0px;height:32.0px;background:#fbe78e;box-shadow:inset 0 0 0 1.5px rgba(60,60,60,.35)"></div>
<div style="left:1798.7px;top:1774.0px;width:46.0px;height:32.0px;background:#f3aeac;box-shadow:inset 0 0 0 1.5px rgba(60,60,60,.35)"></div>
<div style="left:1798.7px;top:1808.0px;width:46.0px;height:32.0px;background:#fcefb2;box-shadow:inset 0 0 0 1.5px rgba(60,60,60,.35)"></div>
<div style="left:1846.7px;top:1774.0px;width:46.0px;height:32.0px;background:#f8d7d6;box-shadow:inset 0 0 0 1.5px rgba(60,60,60,.35)"></div>
<div style="left:1846.7px;top:1808.0px;width:46.0px;height:32.0px;background:#fdf6d8;box-shadow:inset 0 0 0 1.5px rgba(60,60,60,.35)"></div>
<div style="left:1894.7px;top:1774.0px;width:46.0px;height:32.0px;background:#240d0c;box-shadow:inset 0 0 0 1.5px rgba(60,60,60,.35)"></div>
<div style="left:1894.7px;top:1808.0px;width:46.0px;height:32.0px;background:#27220e;box-shadow:inset 0 0 0 1.5px rgba(60,60,60,.35)"></div>
<div style="left:1942.7px;top:1774.0px;width:46.0px;height:32.0px;background:#491a18;box-shadow:inset 0 0 0 1.5px rgba(60,60,60,.35)"></div>
<div style="left:1942.7px;top:1808.0px;width:46.0px;height:32.0px;background:#4e441e;box-shadow:inset 0 0 0 1.5px rgba(60,60,60,.35)"></div>
<div style="left:1990.7px;top:1774.0px;width:46.0px;height:32.0px;background:#6e2825;box-shadow:inset 0 0 0 1.5px rgba(60,60,60,.35)"></div>
<div style="left:1990.7px;top:1808.0px;width:46.0px;height:32.0px;background:#75682e;box-shadow:inset 0 0 0 1.5px rgba(60,60,60,.35)"></div>
<div style="left:2038.7px;top:1774.0px;width:46.0px;height:32.0px;background:#933531;box-shadow:inset 0 0 0 1.5px rgba(60,60,60,.35)"></div>
<div style="left:2038.7px;top:1808.0px;width:46.0px;height:32.0px;background:#9c8a3d;box-shadow:inset 0 0 0 1.5px rgba(60,60,60,.35)"></div>
<div style="left:2086.7px;top:1774.0px;width:46.0px;height:32.0px;background:#b8433e;box-shadow:inset 0 0 0 1.5px rgba(60,60,60,.35)"></div>
<div style="left:2086.7px;top:1808.0px;width:46.0px;height:32.0px;background:#c3ac4d;box-shadow:inset 0 0 0 1.5px rgba(60,60,60,.35)"></div>
<div style="left:2134.7px;top:1774.0px;width:46.0px;height:32.0px;background:#c56663;box-shadow:inset 0 0 0 1.5px rgba(60,60,60,.35)"></div>
<div style="left:2134.7px;top:1808.0px;width:46.0px;height:32.0px;background:#cfbd6d;box-shadow:inset 0 0 0 1.5px rgba(60,60,60,.35)"></div>
<div style="left:2182.7px;top:1774.0px;width:46.0px;height:32.0px;background:#d28b89;box-shadow:inset 0 0 0 1.5px rgba(60,60,60,.35)"></div>
<div style="left:2182.7px;top:1808.0px;width:46.0px;height:32.0px;background:#dbce90;box-shadow:inset 0 0 0 1.5px rgba(60,60,60,.35)"></div>
<div style="left:2230.7px;top:1774.0px;width:46.0px;height:32.0px;background:#e0b1b0;box-shadow:inset 0 0 0 1.5px rgba(60,60,60,.35)"></div>
<div style="left:2230.7px;top:1808.0px;width:46.0px;height:32.0px;background:#e7ddb4;box-shadow:inset 0 0 0 1.5px rgba(60,60,60,.35)"></div>
<div style="left:2278.7px;top:1774.0px;width:46.0px;height:32.0px;background:#efd8d8;box-shadow:inset 0 0 0 1.5px rgba(60,60,60,.35)"></div>
<div style="left:2278.7px;top:1808.0px;width:46.0px;height:32.0px;background:#f3eed9;box-shadow:inset 0 0 0 1.5px rgba(60,60,60,.35)"></div>
<div style="left:2326.7px;top:1774.0px;width:46.0px;height:32.0px;background:#231c1c;box-shadow:inset 0 0 0 1.5px rgba(60,60,60,.35)"></div>
<div style="left:2326.7px;top:1808.0px;width:46.0px;height:32.0px;background:#24221d;box-shadow:inset 0 0 0 1.5px rgba(60,60,60,.35)"></div>
<div style="left:2374.7px;top:1774.0px;width:46.0px;height:32.0px;background:#453837;box-shadow:inset 0 0 0 1.5px rgba(60,60,60,.35)"></div>
<div style="left:2374.7px;top:1808.0px;width:46.0px;height:32.0px;background:#474538;box-shadow:inset 0 0 0 1.5px rgba(60,60,60,.35)"></div>
<div style="left:2422.7px;top:1774.0px;width:46.0px;height:32.0px;background:#685454;box-shadow:inset 0 0 0 1.5px rgba(60,60,60,.35)"></div>
<div style="left:2422.7px;top:1808.0px;width:46.0px;height:32.0px;background:#6b6755;box-shadow:inset 0 0 0 1.5px rgba(60,60,60,.35)"></div>
<div style="left:2470.7px;top:1774.0px;width:46.0px;height:32.0px;background:#8c7070;box-shadow:inset 0 0 0 1.5px rgba(60,60,60,.35)"></div>
<div style="left:2470.7px;top:1808.0px;width:46.0px;height:32.0px;background:#908a72;box-shadow:inset 0 0 0 1.5px rgba(60,60,60,.35)"></div>
<div style="left:2518.7px;top:1774.0px;width:46.0px;height:32.0px;background:#a89493;box-shadow:inset 0 0 0 1.5px rgba(60,60,60,.35)"></div>
<div style="left:2518.7px;top:1808.0px;width:46.0px;height:32.0px;background:#aba795;box-shadow:inset 0 0 0 1.5px rgba(60,60,60,.35)"></div>
<div style="left:2566.7px;top:1774.0px;width:46.0px;height:32.0px;background:#c5b8b7;box-shadow:inset 0 0 0 1.5px rgba(60,60,60,.35)"></div>
<div style="left:2566.7px;top:1808.0px;width:46.0px;height:32.0px;background:#c7c4b8;box-shadow:inset 0 0 0 1.5px rgba(60,60,60,.35)"></div>
<div style="left:2614.7px;top:1774.0px;width:46.0px;height:32.0px;background:#e2dbdb;box-shadow:inset 0 0 0 1.5px rgba(60,60,60,.35)"></div>
<div style="left:2614.7px;top:1808.0px;width:46.0px;height:32.0px;background:#e3e2dc;box-shadow:inset 0 0 0 1.5px rgba(60,60,60,.35)"></div>
<div style="left:2662.7px;top:1774.0px;width:46.0px;height:32.0px;background:#281203;box-shadow:inset 0 0 0 1.5px rgba(60,60,60,.35)"></div>
<div style="left:2662.7px;top:1808.0px;width:46.0px;height:32.0px;background:#242b07;box-shadow:inset 0 0 0 1.5px rgba(60,60,60,.35)"></div>
<div style="left:2710.7px;top:1774.0px;width:46.0px;height:32.0px;background:#4f2509;box-shadow:inset 0 0 0 1.5px rgba(60,60,60,.35)"></div>
<div style="left:2710.7px;top:1808.0px;width:46.0px;height:32.0px;background:#475515;box-shadow:inset 0 0 0 1.5px rgba(60,60,60,.35)"></div>
<div style="left:2758.7px;top:1774.0px;width:46.0px;height:32.0px;background:#773812;box-shadow:inset 0 0 0 1.5px rgba(60,60,60,.35)"></div>
<div style="left:2758.7px;top:1808.0px;width:46.0px;height:32.0px;background:#6b7f24;box-shadow:inset 0 0 0 1.5px rgba(60,60,60,.35)"></div>
<svg width="130" height="66" style="left:2810px;top:1774px" viewBox="0 0 130 66"><path d="M7 39l11.500 -11.500l11.500 11.500" stroke="#6a6a6a" stroke-width="4.500" fill="none"/><path d="M53 25.500l11.500 11.500l11.500 -11.500" stroke="#ededed" stroke-width="4.500" fill="none"/><path d="M94 29h28M94 39.500h28M94 50h28" stroke="#ededed" stroke-width="4" fill="none"/></svg>
<div style="left:0.0px;top:1842.0px;width:2940.0px;height:70.0px;background:#353535"></div>
<span class="t " style="left:40.5px;top:1846.0px;font-size:26.00px;line-height:33px;color:#f0f0f0;letter-spacing:-0.002px;transform:scaleX(0.9400);transform-origin:0 50%;">Fill:</span>
<span class="t " style="left:0.5px;top:1879.5px;font-size:26.00px;line-height:33px;color:#f0f0f0;letter-spacing:-0.064px;transform:scaleX(0.9400);transform-origin:0 50%;">Stroke:</span>
<span class="t " style="left:150.5px;top:1846.0px;font-size:26.00px;line-height:33px;color:#f0f0f0;letter-spacing:-0.618px;transform:scaleX(0.9400);transform-origin:0 50%;">N/A</span>
<span class="t " style="left:150.5px;top:1879.5px;font-size:26.00px;line-height:33px;color:#f0f0f0;letter-spacing:-0.618px;transform:scaleX(0.9400);transform-origin:0 50%;">N/A</span>
<span class="t " style="left:318.5px;top:1862.5px;font-size:26.00px;line-height:33px;color:#f0f0f0;letter-spacing:-0.425px;transform:scaleX(0.9400);transform-origin:0 50%;">O:</span>
<div class="fld" style="left:357px;top:1845px;width:143px;height:66px;background:#323232;border-color:#1f1f1f"><i style="left:72px"></i><i style="left:106px"></i></div>
<span class="t " style="left:371.0px;top:1861.5px;font-size:26.00px;line-height:33px;color:#8a8a8a;letter-spacing:0.000px;transform:scaleX(1.0605);transform-origin:0 50%;">100</span>
<div style="left:437.0px;top:1877.0px;width:24.0px;height:3.0px;background:#5c5c5c"></div>
<div style="left:470.5px;top:1877.0px;width:24.0px;height:3.0px;background:#5c5c5c"></div>
<div style="left:481.0px;top:1866.5px;width:3.0px;height:24.0px;background:#5c5c5c"></div>
<div style="left:522.0px;top:1862.0px;width:6.0px;height:31.0px;background:#4a7ce2"></div>
<span class="t " style="left:541.0px;top:1862.0px;font-size:26.00px;line-height:33px;color:#f0f0f0;letter-spacing:-0.230px;transform:scaleX(0.9400);transform-origin:0 50%;">Layer 1</span>
<div style="left:790.0px;top:1856.0px;width:2.0px;height:44.0px;background:#303030"></div>
<span class="t " style="left:804.7px;top:1862.7px;font-size:25.50px;line-height:33px;color:#f0f0f0;font-weight:700;letter-spacing:0.000px;transform:scaleX(1.0201);transform-origin:0 50%;">Ctrl</span>
<span class="t " style="left:850.6px;top:1862.7px;font-size:25.50px;line-height:33px;color:#f0f0f0;letter-spacing:0.000px;transform:scaleX(0.9785);transform-origin:0 50%;">: Select inside groups, Move one axis only;</span>
<span class="t " style="left:1330.6px;top:1862.7px;font-size:25.50px;line-height:33px;color:#f0f0f0;font-weight:700;letter-spacing:0.000px;transform:scaleX(0.9974);transform-origin:0 50%;">Shift</span>
<span class="t " style="left:1388.8px;top:1862.7px;font-size:25.50px;line-height:33px;color:#f0f0f0;letter-spacing:0.000px;transform:scaleX(0.9907);transform-origin:0 50%;">: Add to selection</span>
<div style="left:2284.0px;top:1856.0px;width:2.0px;height:44.0px;background:#303030"></div>
<span class="t " style="left:2298.5px;top:1843.5px;font-size:26.00px;line-height:33px;color:#f0f0f0;letter-spacing:-0.049px;transform:scaleX(0.9400);transform-origin:0 50%;">X:</span>
<span class="t " style="left:2298.5px;top:1873.5px;font-size:26.00px;line-height:33px;color:#f0f0f0;letter-spacing:0.000px;transform:scaleX(0.9511);transform-origin:0 50%;">Y:</span>
<span class="t " style="right:505.0px;top:1843.5px;font-size:26.00px;line-height:33px;color:#f0f0f0;letter-spacing:0.299px;transform:scaleX(1.0700);transform-origin:100% 50%;">594.42</span>
<span class="t " style="right:505.0px;top:1873.5px;font-size:26.00px;line-height:33px;color:#f0f0f0;letter-spacing:0.260px;transform:scaleX(1.0700);transform-origin:100% 50%;">78.73</span>
<span class="t " style="left:2460.5px;top:1862.0px;font-size:26.00px;line-height:33px;color:#f0f0f0;letter-spacing:0.000px;transform:scaleX(0.9522);transform-origin:0 50%;">Z:</span>
<div class="fld" style="left:2492px;top:1845px;width:180px;height:66px;background:#323232;border-color:#1f1f1f"><i style="left:108px"></i><i style="left:142px"></i></div>
<span class="t " style="left:2518.5px;top:1861.5px;font-size:26.00px;line-height:33px;color:#f0f0f0;letter-spacing:0.000px;transform:scaleX(1.0377);transform-origin:0 50%;">30%</span>
<div style="left:2608.0px;top:1877.0px;width:25.0px;height:3.5px;background:#f0f0f0"></div>
<div style="left:2642.0px;top:1877.0px;width:25.0px;height:3.5px;background:#f0f0f0"></div>
<div style="left:2652.7px;top:1866.5px;width:3.5px;height:25.0px;background:#f0f0f0"></div>
<span class="t " style="left:2692.5px;top:1862.0px;font-size:26.00px;line-height:33px;color:#f0f0f0;letter-spacing:-0.766px;transform:scaleX(0.9400);transform-origin:0 50%;">R:</span>
<div class="fld" style="left:2724px;top:1845px;width:196px;height:66px;background:#323232;border-color:#1f1f1f"><i style="left:124px"></i><i style="left:158px"></i></div>
<span class="t " style="left:2756.0px;top:1861.5px;font-size:26.00px;line-height:33px;color:#f0f0f0;letter-spacing:0.324px;transform:scaleX(1.0700);transform-origin:0 50%;">0.00°</span>
<div style="left:2856.0px;top:1877.0px;width:25.0px;height:3.5px;background:#f0f0f0"></div>
<div style="left:2890.0px;top:1877.0px;width:25.0px;height:3.5px;background:#f0f0f0"></div>
<div style="left:2900.7px;top:1866.5px;width:3.5px;height:25.0px;background:#f0f0f0"></div>
<svg width="32" height="32" viewBox="0 0 16 16" style="left:28px;top:148px;overflow:visible;"><path fill-rule="evenodd" fill="#ebebeb" d="M.8 3h7.4L12 6.8V15.2a.8 .8 0 0 1 -.8 .8H.8a.8 .8 0 0 1 -.8 -.8V3.8A.8 .8 0 0 1 .8 3zM2 5v9h8V9H7V5z"/><polygon points="13.00,0.00 13.82,2.17 16.14,2.28 14.33,3.73 14.94,5.97 13.00,4.70 11.06,5.97 11.67,3.73 9.86,2.28 12.18,2.17" fill="#41a132"/></svg>
<svg width="32" height="32" viewBox="0 0 16 16" style="left:110px;top:148px;overflow:visible;"><path fill="#ebebeb" d="M0 1.5a.5 .5 0 0 1 .5 -.5H6v3h8v2.3H2.7L1.7 13 0.6 15H0z"/><path fill="#ebebeb" d="M3.6 8H16l-1.5 7H1.3l1.2-2.2z"/></svg>
<svg width="32" height="32" viewBox="0 0 16 16" style="left:192px;top:148px;overflow:visible;"><path fill="#41a132" d="M7 0h2v5h3L8 9 4 5h3z"/><path fill-rule="evenodd" fill="#ebebeb" d="M3.3 8h1.5L3.6 10.3H12.4L11.2 8h1.5L15 11v5H1v-5zM5 12.3v1.3a.5 .5 0 0 0 .5 .5h5a.5 .5 0 0 0 .5 -.5v-1.3h-1v.8H6v-.8z"/></svg>
<svg width="32" height="32" viewBox="0 0 16 16" style="left:274px;top:148px;overflow:visible;"><path fill="#ebebeb" d="M4 1h8v2H4z"/><path fill="#bdbdbd" d="M2 4h12a1 1 0 0 1 1 1v4a1 1 0 0 1 -1 1H2a1 1 0 0 1 -1 -1V5a1 1 0 0 1 1 -1z"/><path fill="#353535" stroke="#353535" stroke-width="1" d="M3.5 8.5h9v6h-9z"/><path fill="#ebebeb" d="M4 9h8v5H4z"/></svg>
<svg width="32" height="32" viewBox="0 0 16 16" style="left:368px;top:148px;overflow:visible;"><path fill-rule="evenodd" fill="#ebebeb" d="M3.8 0H11l4 4v10.2a.8 .8 0 0 1 -.8 .8H3.8a.8 .8 0 0 1 -.8 -.8V10h2v3h8V6h-3V2H5v4H3V.8A.8 .8 0 0 1 3.800 0z"/><path fill="#41a132" d="M1 7h6V5l3 3-3 3V9H1z"/></svg>
<svg width="32" height="32" viewBox="0 0 16 16" style="left:450px;top:148px;overflow:visible;"><path fill-rule="evenodd" fill="#ebebeb" d="M.8 0H8l4 4v3h-2V6H7V2H2v11h8v-2h2v3.200a.8 .8 0 0 1 -.8 .8H.8a.8 .8 0 0 1 -.8 -.8V.8A.8 .8 0 0 1 .8 0z"/><path fill="#41a132" d="M7 8h6V6l3 3-3 3v-2H7z"/></svg>
<svg width="32" height="32" viewBox="0 0 16 16" style="left:544px;top:148px;overflow:visible;"><path fill="#8b8b8b" d="M5 2.200v3h5.500a3.500 3.500 0 0 1 3.500 3.500v.8a3.500 3.500 0 0 1 -3.500 3.500H10v-2h.5a1.500 1.500 0 0 0 1.500 -1.500v-.8a1.500 1.500 0 0 0 -1.500 -1.500H5v3L1.200 6.200z"/></svg>
<svg width="32" height="32" viewBox="0 0 16 16" style="left:626px;top:148px;overflow:visible;"><g transform="translate(16 0) scale(-1 1)"><path fill="#8b8b8b" d="M5 2.200v3h5.500a3.500 3.500 0 0 1 3.500 3.500v.8a3.500 3.500 0 0 1 -3.500 3.500H10v-2h.5a1.500 1.500 0 0 0 1.500 -1.500v-.8a1.500 1.500 0 0 0 -1.500 -1.500H5v3L1.200 6.200z"/></g></svg>
<svg width="32" height="32" viewBox="0 0 16 16" style="left:720px;top:148px;overflow:visible;"><path fill="#ebebeb" d="M0 0h11v5H4v6H0z"/><path fill="#ebebeb" d="M5 6h11v10H5z"/></svg>
<svg width="32" height="32" viewBox="0 0 16 16" style="left:802px;top:148px;overflow:visible;"><g fill="none" stroke="#ebebeb"><path stroke-width="1.500" stroke-linecap="round" d="M3.500 1L10.600 10.400M12.500 1L5.400 10.400"/><circle cx="3.700" cy="12.500" r="2.600" stroke-width="1.900"/><circle cx="12.400" cy="12.500" r="2.600" stroke-width="1.900"/></g></svg>
<svg width="32" height="32" viewBox="0 0 16 16" style="left:884px;top:148px;overflow:visible;"><path fill-rule="evenodd" fill="#ebebeb" d="M0 2h3.500v1H1v12h12V3h-2.500V2H14v14H0z"/><path fill="#ebebeb" d="M4.500 1h5a.5 .5 0 0 1 .5 .5V4H4V1.500a.5 .5 0 0 1 .5 -.5z"/><path fill="#ebebeb" d="M3 5h8v7l-2 2H3z"/></svg>
<svg width="32" height="32" viewBox="0 0 16 16" style="left:978px;top:148px;overflow:visible;"><circle cx="7.500" cy="7.500" r="7.500" fill="#ebebeb"/><path d="M12.500 12.500L15 15" stroke="#ebebeb" stroke-width="2.400" stroke-linecap="round"/><path d="M3.00 3.00h1.00v1.00h-1.00zM3.00 11.20h1.00v1.00h-1.00zM5.05 3.00h1.00v1.00h-1.00zM5.05 11.20h1.00v1.00h-1.00zM7.10 3.00h1.00v1.00h-1.00zM7.10 11.20h1.00v1.00h-1.00zM9.15 3.00h1.00v1.00h-1.00zM9.15 11.20h1.00v1.00h-1.00zM11.20 3.00h1.00v1.00h-1.00zM11.20 11.20h1.00v1.00h-1.00zM3.00 5.05h1.00v1.00h-1.00zM11.20 5.05h1.00v1.00h-1.00zM3.00 7.10h1.00v1.00h-1.00zM11.20 7.10h1.00v1.00h-1.00zM3.00 9.15h1.00v1.00h-1.00zM11.20 9.15h1.00v1.00h-1.00z" fill="#353535"/></svg>
<svg width="32" height="32" viewBox="0 0 16 16" style="left:1060px;top:148px;overflow:visible;"><circle cx="7.500" cy="7.500" r="7.500" fill="#ebebeb"/><path d="M12.500 12.500L15 15" stroke="#ebebeb" stroke-width="2.400" stroke-linecap="round"/><circle cx="6" cy="6" r="3" fill="#353535"/><path d="M7 7h5v5H7z" fill="#ebebeb" stroke="#ebebeb" stroke-width="1"/><path d="M7.500 7.500h4v4h-4z" fill="#353535"/></svg>
<svg width="32" height="32" viewBox="0 0 16 16" style="left:1142px;top:148px;overflow:visible;"><circle cx="7.500" cy="7.500" r="7.500" fill="#ebebeb"/><path d="M12.500 12.500L15 15" stroke="#ebebeb" stroke-width="2.400" stroke-linecap="round"/><path d="M4.500 2.500h6v10h-6z" fill="none" stroke="#353535" stroke-width="1"/></svg>
<svg width="32" height="32" viewBox="0 0 16 16" style="left:1224px;top:148px;overflow:visible;"><path fill="none" stroke="#8b8b8b" stroke-width="1" d="M1.500 2.500v-2h2M13.500 .5h2v2M15.500 12.500v2h-2M3.500 14.500h-2v-2"/><path fill="none" stroke="#ebebeb" stroke-width="1.100" d="M3.500 2.500h10v10h-10z"/><path stroke="#ebebeb" stroke-width="1" d="M8.500 5v5M6 7.500h5"/></svg>
<svg width="32" height="32" viewBox="0 0 16 16" style="left:1318px;top:148px;overflow:visible;"><path fill="#ebebeb" d="M0 1h10v4H4v5H0z"/><path fill="#41a132" d="M5 6h10v9H5z"/></svg>
<svg width="32" height="32" viewBox="0 0 16 16" style="left:1400px;top:148px;overflow:visible;"><path fill="#ebebeb" d="M0 0h10v4H4v5H0z"/><path fill="#ebebeb" d="M5 5h10v11H5z"/><path fill="#353535" d="M7 10h6v4H7z"/><path fill="none" stroke="#353535" stroke-width="1.200" d="M8.300 10V8.700a1.700 1.700 0 0 1 3.400 0V10"/></svg>
<svg width="32" height="32" viewBox="0 0 16 16" style="left:1482px;top:148px;overflow:visible;"><path fill="#ebebeb" d="M0 0h10v4H4v5H0z"/><path fill="#ebebeb" d="M5 5h10v11H5z"/><path fill="#353535" d="M7 10.500h5v3.500H7z"/><path fill="none" stroke="#353535" stroke-width="1.100" d="M10.600 10.500V8.600a1.300 1.300 0 0 1 2.600 0V9.400"/></svg>
<svg width="32" height="32" viewBox="0 0 16 16" style="left:1576px;top:148px;overflow:visible;"><path fill="#41a132" d="M0 0h3v3H0zM13 0h3v3h-3zM0 13h3v3H0zM13 13h3v3h-3z"/><path fill="#ebebeb" d="M6 7h6v6H6z"/><circle cx="5.500" cy="7.500" r="4.200" fill="#353535"/><circle cx="5.500" cy="7.500" r="3.600" fill="#ebebeb"/></svg>
<svg width="32" height="32" viewBox="0 0 16 16" style="left:1658px;top:148px;overflow:visible;"><path fill="#ebebeb" d="M2 1h2v2H2zM10 1h2v2h-2zM14 3h2v2h-2zM2 10h2v2H2zM6 13h2v2H6zM14 13h2v2h-2z"/><path fill="#8b8b8b" d="M14 6v6H8z"/><path fill="#8b8b8b" d="M10.500 9h3.500v3h-3.500z"/><circle cx="6.800" cy="6.500" r="4.200" fill="#353535"/><circle cx="6.800" cy="6.500" r="3.600" fill="#ebebeb"/></svg>
<svg width="32" height="32" viewBox="0 0 16 16" style="left:1752px;top:148px;overflow:visible;"><path fill="none" stroke="#ebebeb" stroke-width="1" d="M.5 12V.5H12"/><path fill="#ebebeb" d="M15.300 1.200l.6 .6L8.600 10.200 7 8.800z"/><path fill="#ebebeb" d="M6.400 9.400l1.800 1.600-1 1.100-1.700-1.600z"/><path fill="#3b8fde" d="M4.800 11.100l1.600 1.500c-.6 1.700-3.400 3-5.900 2.900 1.700-.9 2.200-3.200 4.300-4.400z"/></svg>
<svg width="32" height="32" viewBox="0 0 16 16" style="left:1834px;top:148px;overflow:visible;"><path fill="#ebebeb" d="M2 2h12v2.600h-.8c-.2-1-.6-1.300-1.600-1.300H9.300v9.200c0 .6.300.8 1.300.9v.6H5.400v-.6c1-.1 1.300-.3 1.300-.9V3.300H4.400c-1 0-1.400.3-1.600 1.300H2z"/></svg>
<svg width="32" height="32" viewBox="0 0 16 16" style="left:1916px;top:148px;overflow:visible;"><path fill="#3b8fde" d="M2.500 2H12l-2.500 3H0z"/><path fill="#8cc4ea" d="M4.500 7H14l-2.500 3H2z"/><path fill="#ebebeb" d="M6.500 12H16l-2.500 3H4z"/></svg>
<svg width="32" height="32" viewBox="0 0 16 16" style="left:1998px;top:148px;overflow:visible;"><path fill="none" stroke="#ebebeb" stroke-width="1" d="M.5 .5h15v15H.5z"/><path fill="#41a132" d="M2 2h12v2H2z"/><path fill="none" stroke="#ebebeb" stroke-width="1.300" d="M6.500 7L3 10l3.500 3M9.500 7L13 10l-3.500 3"/></svg>
<svg width="32" height="32" viewBox="0 0 16 16" style="left:2080px;top:148px;overflow:visible;"><path fill="none" stroke="#ebebeb" stroke-width="1" d="M.5 .5h15v15H.5z"/><path fill="#e8368f" d="M2 2h12v2H2z"/><path fill="none" stroke="#ebebeb" stroke-width="1.300" d="M6.500 6c-1.500 0-1.500 .5-1.500 1.500s0 2-1.500 2c1.500 0 1.500 1 1.500 2s0 1.500 1.500 1.500M9.500 6c1.500 0 1.500 .5 1.500 1.500s0 2 1.500 2c-1.500 0-1.500 1-1.500 2s0 1.500-1.500 1.500"/></svg>
<svg width="32" height="32" viewBox="0 0 16 16" style="left:2162px;top:148px;overflow:visible;"><path fill="#41a132" d="M1 1h1v13H1z"/><path fill="#ebebeb" d="M4 1h7v3H4zM4 6h10v3H4zM4 11h6v3H4z"/></svg>
<svg width="32" height="32" viewBox="0 0 16 16" style="left:2256px;top:148px;overflow:visible;"><path fill="none" stroke="#ebebeb" stroke-width="2.200" stroke-linejoin="round" d="M7.300 13.800H3.100V2h7.200l2.800 2.800v5.200"/><path stroke="#353535" stroke-width="4.200" d="M8.500 9L12.700 14.200"/><circle cx="8.100" cy="8.500" r="4" fill="#353535"/><path stroke="#ebebeb" stroke-width="2.300" d="M8.800 9.400L13.500 15.200"/><circle cx="8.100" cy="8.500" r="2.200" fill="none" stroke="#ebebeb" stroke-width="1.900"/><path stroke="#353535" stroke-width="2" d="M8.100 8.500L4.700 5.100"/></svg>
<svg width="32" height="32" viewBox="0 0 16 16" style="left:2338px;top:148px;overflow:visible;"><g fill="none" stroke="#ebebeb" stroke-linecap="round"><path stroke-width="2" d="M1.500 14.500L9 7"/><path stroke-width="1.300" d="M9 7l4.500-5.500"/><path stroke-width="2.200" d="M13.200 1.800l1 1"/><path stroke-width="1.800" d="M5 5l8.500 8.500"/></g><path fill="#ebebeb" d="M1 1.800L3.200 4l1.300-1.300L2.300 .5A3.200 3.200 0 0 1 6.500 4.700L5 6 3.500 6.500A3.200 3.200 0 0 1 1 1.800z"/><path fill="#ebebeb" d="M15 14.200L12.800 12l-1.300 1.300 2.200 2.200A3.200 3.200 0 0 1 9.500 11.300L11 10l1.500-.5A3.200 3.200 0 0 1 15 14.200z"/></svg>
<svg width="32" height="32" viewBox="0 0 16 16" style="left:2793px;top:148px;overflow:visible;"><path fill="none" stroke="#ebebeb" stroke-width="2.300" d="M7 2.200h2.200a5.800 5.800 0 0 1 0 11.600H7"/><circle cx="3.500" cy="2.200" r="1.500" fill="#41a132"/><circle cx="3.500" cy="13.800" r="1.500" fill="#41a132"/><path fill="none" stroke="#ebebeb" stroke-width="1.200" d="M3.500 5L1.500 8h2.500L2 11"/></svg>
<svg width="32" height="32" viewBox="0 0 16 16" style="left:28px;top:232px;overflow:visible;"><path d="M0.00 0.00h0.75v0.75h-0.75zM0.00 14.45h0.75v0.75h-0.75zM1.61 0.00h0.75v0.75h-0.75zM1.61 14.45h0.75v0.75h-0.75zM3.21 0.00h0.75v0.75h-0.75zM3.21 14.45h0.75v0.75h-0.75zM4.82 0.00h0.75v0.75h-0.75zM4.82 14.45h0.75v0.75h-0.75zM6.42 0.00h0.75v0.75h-0.75zM6.42 14.45h0.75v0.75h-0.75zM8.03 0.00h0.75v0.75h-0.75zM8.03 14.45h0.75v0.75h-0.75zM9.63 0.00h0.75v0.75h-0.75zM9.63 14.45h0.75v0.75h-0.75zM11.24 0.00h0.75v0.75h-0.75zM11.24 14.45h0.75v0.75h-0.75zM12.84 0.00h0.75v0.75h-0.75zM12.84 14.45h0.75v0.75h-0.75zM14.45 0.00h0.75v0.75h-0.75zM14.45 14.45h0.75v0.75h-0.75zM0.00 1.61h0.75v0.75h-0.75zM14.45 1.61h0.75v0.75h-0.75zM0.00 3.21h0.75v0.75h-0.75zM14.45 3.21h0.75v0.75h-0.75zM0.00 4.82h0.75v0.75h-0.75zM14.45 4.82h0.75v0.75h-0.75zM0.00 6.42h0.75v0.75h-0.75zM14.45 6.42h0.75v0.75h-0.75zM0.00 8.03h0.75v0.75h-0.75zM14.45 8.03h0.75v0.75h-0.75zM0.00 9.63h0.75v0.75h-0.75zM14.45 9.63h0.75v0.75h-0.75zM0.00 11.24h0.75v0.75h-0.75zM14.45 11.24h0.75v0.75h-0.75zM0.00 12.84h0.75v0.75h-0.75zM14.45 12.84h0.75v0.75h-0.75z" fill="#ebebeb"/><path fill="#ebebeb" d="M2 8h8v5H2z"/><circle cx="9.500" cy="6" r="4.200" fill="#353535"/><circle cx="9.500" cy="6" r="3.600" fill="#ebebeb"/></svg>
<svg width="32" height="32" viewBox="0 0 16 16" style="left:110px;top:232px;overflow:visible;"><path d="M0.00 0.00h0.75v0.75h-0.75zM0.00 14.45h0.75v0.75h-0.75zM1.61 0.00h0.75v0.75h-0.75zM1.61 14.45h0.75v0.75h-0.75zM3.21 0.00h0.75v0.75h-0.75zM3.21 14.45h0.75v0.75h-0.75zM4.82 0.00h0.75v0.75h-0.75zM4.82 14.45h0.75v0.75h-0.75zM6.42 0.00h0.75v0.75h-0.75zM6.42 14.45h0.75v0.75h-0.75zM8.03 0.00h0.75v0.75h-0.75zM8.03 14.45h0.75v0.75h-0.75zM9.63 0.00h0.75v0.75h-0.75zM9.63 14.45h0.75v0.75h-0.75zM11.24 0.00h0.75v0.75h-0.75zM11.24 14.45h0.75v0.75h-0.75zM12.84 0.00h0.75v0.75h-0.75zM12.84 14.45h0.75v0.75h-0.75zM14.45 0.00h0.75v0.75h-0.75zM14.45 14.45h0.75v0.75h-0.75zM0.00 1.61h0.75v0.75h-0.75zM14.45 1.61h0.75v0.75h-0.75zM0.00 3.21h0.75v0.75h-0.75zM14.45 3.21h0.75v0.75h-0.75zM0.00 4.82h0.75v0.75h-0.75zM14.45 4.82h0.75v0.75h-0.75zM0.00 6.42h0.75v0.75h-0.75zM14.45 6.42h0.75v0.75h-0.75zM0.00 8.03h0.75v0.75h-0.75zM14.45 8.03h0.75v0.75h-0.75zM0.00 9.63h0.75v0.75h-0.75zM14.45 9.63h0.75v0.75h-0.75zM0.00 11.24h0.75v0.75h-0.75zM14.45 11.24h0.75v0.75h-0.75zM0.00 12.84h0.75v0.75h-0.75zM14.45 12.84h0.75v0.75h-0.75z" fill="#ebebeb"/><path fill="#cfcfcf" d="M5 2h8l-3 3H2zM5 6h8l-3 3H2zM5 10h8l-3 3H2z"/></svg>
<svg width="32" height="32" viewBox="0 0 16 16" style="left:192px;top:232px;overflow:visible;"><path d="M0.00 0.00h0.75v0.75h-0.75zM0.00 14.45h0.75v0.75h-0.75zM1.61 0.00h0.75v0.75h-0.75zM1.61 14.45h0.75v0.75h-0.75zM3.21 0.00h0.75v0.75h-0.75zM3.21 14.45h0.75v0.75h-0.75zM4.82 0.00h0.75v0.75h-0.75zM4.82 14.45h0.75v0.75h-0.75zM6.42 0.00h0.75v0.75h-0.75zM6.42 14.45h0.75v0.75h-0.75zM8.03 0.00h0.75v0.75h-0.75zM8.03 14.45h0.75v0.75h-0.75zM9.63 0.00h0.75v0.75h-0.75zM9.63 14.45h0.75v0.75h-0.75zM11.24 0.00h0.75v0.75h-0.75zM11.24 14.45h0.75v0.75h-0.75zM12.84 0.00h0.75v0.75h-0.75zM12.84 14.45h0.75v0.75h-0.75zM14.45 0.00h0.75v0.75h-0.75zM14.45 14.45h0.75v0.75h-0.75zM0.00 1.61h0.75v0.75h-0.75zM14.45 1.61h0.75v0.75h-0.75zM0.00 3.21h0.75v0.75h-0.75zM14.45 3.21h0.75v0.75h-0.75zM0.00 4.82h0.75v0.75h-0.75zM14.45 4.82h0.75v0.75h-0.75zM0.00 6.42h0.75v0.75h-0.75zM14.45 6.42h0.75v0.75h-0.75zM0.00 8.03h0.75v0.75h-0.75zM14.45 8.03h0.75v0.75h-0.75zM0.00 9.63h0.75v0.75h-0.75zM14.45 9.63h0.75v0.75h-0.75zM0.00 11.24h0.75v0.75h-0.75zM14.45 11.24h0.75v0.75h-0.75zM0.00 12.84h0.75v0.75h-0.75zM14.45 12.84h0.75v0.75h-0.75z" fill="#8b8b8b"/><path fill="#8b8b8b" d="M2 8h8v5H2z"/><circle cx="9.500" cy="6" r="4.200" fill="#353535"/><circle cx="9.500" cy="6" r="3.600" fill="#8b8b8b"/></svg>
<svg width="32" height="32" viewBox="0 0 16 16" style="left:274px;top:232px;overflow:visible;"><path fill="#ebebeb" d="M10 1h5v5h-5z"/><path fill="none" stroke="#ebebeb" stroke-width="1" stroke-dasharray="1.500 1.250" d="M1.500 4.500h10v10h-10z"/><path fill="#353535" d="M9 0h7v7H9z" opacity="0"/></svg>
<svg width="32" height="32" viewBox="0 0 16 16" style="left:368px;top:232px;overflow:visible;"><path fill="#8b8b8b" d="M11 0h5v10h-5z"/><path fill="#ebebeb" d="M0 11h10v5H0z"/><path fill="none" stroke="#41a132" stroke-width="2" d="M9.500 2C6.500 2 4.500 4 4.300 6.500"/><path fill="#41a132" d="M1.200 5.300h6L4.200 9.200z"/></svg>
<svg width="32" height="32" viewBox="0 0 16 16" style="left:450px;top:232px;overflow:visible;"><g transform="translate(16 0) scale(-1 1)"><path fill="#8b8b8b" d="M11 0h5v10h-5z"/><path fill="#ebebeb" d="M0 11h10v5H0z"/><path fill="none" stroke="#41a132" stroke-width="2" d="M9.500 2C6.500 2 4.500 4 4.300 6.500"/><path fill="#41a132" d="M1.200 5.300h6L4.200 9.200z"/></g></svg>
<svg width="32" height="32" viewBox="0 0 16 16" style="left:532px;top:232px;overflow:visible;"><path fill="#8b8b8b" d="M7 3v10H1z"/><path fill="#ebebeb" d="M10 3v10h6z"/><path stroke="#ebebeb" stroke-width="1" stroke-dasharray="2 1" d="M8.500 1v14"/></svg>
<svg width="32" height="32" viewBox="0 0 16 16" style="left:614px;top:232px;overflow:visible;"><path fill="#8b8b8b" d="M3 1v6h10z"/><path fill="#ebebeb" d="M3 10h10L3 16z"/><path stroke="#ebebeb" stroke-width="1" stroke-dasharray="2 1" d="M1 8.500h14"/></svg>
<svg width="32" height="32" viewBox="0 0 16 16" style="left:708px;top:232px;overflow:visible;"><path fill="#ebebeb" d="M1 1h13v2H1z"/><path fill="#8b8b8b" d="M1 5h5v2H1z"/><path fill="#8b8b8b" d="M1 9h5v2H1z"/><path fill="#8b8b8b" d="M1 13h5v2H1z"/><path fill="#41a132" d="M10 15V9H8l3-4 3 4h-2v6z"/></svg>
<svg width="32" height="32" viewBox="0 0 16 16" style="left:790px;top:232px;overflow:visible;"><path fill="#8b8b8b" d="M1 1h5v2H1z"/><path fill="#ebebeb" d="M1 5h13v2H1z"/><path fill="#8b8b8b" d="M1 9h5v2H1z"/><path fill="#8b8b8b" d="M1 13h5v2H1z"/><path fill="#41a132" d="M10 15v-3H8l3-4 3 4h-2v3z"/></svg>
<svg width="32" height="32" viewBox="0 0 16 16" style="left:872px;top:232px;overflow:visible;"><path fill="#8b8b8b" d="M1 1h5v2H1z"/><path fill="#8b8b8b" d="M1 5h5v2H1z"/><path fill="#ebebeb" d="M1 9h13v2H1z"/><path fill="#8b8b8b" d="M1 13h5v2H1z"/><path fill="#41a132" d="M10 1v3.500H8l3 3.700 3-3.700h-2V1z"/></svg>
<svg width="32" height="32" viewBox="0 0 16 16" style="left:954px;top:232px;overflow:visible;"><path fill="#8b8b8b" d="M1 1h5v2H1z"/><path fill="#8b8b8b" d="M1 5h5v2H1z"/><path fill="#8b8b8b" d="M1 9h5v2H1z"/><path fill="#ebebeb" d="M1 13h13v2H1z"/><path fill="#41a132" d="M10 1v7H8l3 3.700 3-3.700h-2V1z"/></svg>
<svg width="32" height="32" viewBox="0 0 16 16" style="left:1900px;top:232px;overflow:visible;"><path fill="#ebebeb" d="M1.500 8h9.500v8H1.500z"/><path fill="none" stroke="#ebebeb" stroke-width="2" d="M8.300 8V5a3 3 0 0 1 6 0V7"/></svg>
<svg width="32" height="32" viewBox="0 0 16 16" style="left:2406px;top:233px;overflow:visible;"><path fill="#ebebeb" d="M1 12h2v2H1zM4 12h2v2H4zM7 12h4v-2l4 3-4 3v-2H7z"/><path fill="none" stroke="#ebebeb" stroke-width="1.300" d="M1 1.700h13.300V9M1 5h10v3.500"/></svg>
<svg width="32" height="32" viewBox="0 0 16 16" style="left:2488px;top:233px;overflow:visible;"><path fill="#ebebeb" d="M1 12h2v2H1zM4 12h2v2H4zM7 12h4v-2l4 3-4 3v-2H7z"/><path fill="none" stroke="#ebebeb" stroke-width="1.300" d="M1 1.700h7a6.300 6.300 0 0 1 6.300 6.300V9M1 5h6a4 4 0 0 1 4 3.500"/></svg>
<svg width="32" height="32" viewBox="0 0 16 16" style="left:2570.5px;top:233px;overflow:visible;"><path fill="#ebebeb" d="M1 12h2v2H1zM4 12h2v2H4zM7 12h4v-2l4 3-4 3v-2H7z"/><defs><linearGradient id="gmv" x1="0" x2="1"><stop offset="0" stop-color="#2f8fe8"/><stop offset="1" stop-color="#eee"/></linearGradient></defs><path fill="url(#gmv)" d="M1 3h11v5H1z"/><path fill="none" stroke="#ebebeb" stroke-width="1.300" d="M1 1.200h13.300V9M2 9.800h10"/></svg>
<svg width="32" height="32" viewBox="0 0 16 16" style="left:2652px;top:233px;overflow:visible;"><path fill="#ebebeb" d="M1 12h2v2H1zM4 12h2v2H4zM7 12h4v-2l4 3-4 3v-2H7z"/><path fill="none" stroke="#3b8fde" stroke-width="1" stroke-dasharray="1 1" d="M1 3.500l3 1.500-3 1.500M4 3.500l3 1.500-3 1.500M7 3.500l3 1.500-3 1.500"/><path fill="none" stroke="#ebebeb" stroke-width="1.300" d="M1 1.200h13.300V9M2 9.800h10"/></svg>
<svg width="32" height="32" viewBox="0 0 16 16" style="left:10px;top:306px;overflow:visible;"><path fill="none" stroke="#ebebeb" stroke-width="2" stroke-linejoin="round" d="M3 2.200v11.300l3-2.500 1.800 3.600 2.700-1.300L8.700 9.800l4.500-.8z"/></svg>
<svg width="32" height="32" viewBox="0 0 16 16" style="left:10px;top:370px;overflow:visible;"><path fill="none" stroke="#8b8b8b" stroke-width="1" d="M1.500 14.500C1.500 6.500 6.500 1.800 14 1.500"/><path fill="#ebebeb" d="M2 2h6v6H2z"/><path fill="#353535" d="M4 4h2v2H4z"/><path fill="#ebebeb" d="M10 9.300l5 2.900-3.300.6-1.700 2.700z"/></svg>
<svg width="32" height="32" viewBox="0 0 16 16" style="left:10px;top:434px;overflow:visible;"><circle cx="6" cy="6" r="4.300" fill="none" stroke="#ebebeb" stroke-width="1.700"/><path fill="none" stroke="#ebebeb" stroke-width="1.900" d="M7 7h7.100v7.100H7z"/><path fill="none" stroke="#8b8b8b" stroke-width=".8" opacity=".8" d="M6 10.300V6h4.300"/></svg>
<svg width="32" height="32" viewBox="0 0 16 16" style="left:10px;top:504px;overflow:visible;"><rect x="2" y="2" width="12" height="12" rx="1" fill="#e8368f" stroke="#ebebeb" stroke-width="2"/></svg>
<svg width="32" height="32" viewBox="0 0 16 16" style="left:10px;top:568px;overflow:visible;"><circle cx="8" cy="8" r="6" fill="#b5327d" stroke="#ebebeb" stroke-width="1.800"/></svg>
<svg width="32" height="32" viewBox="0 0 16 16" style="left:10px;top:632px;overflow:visible;"><polygon points="4.30,2.37 9.16,4.74 8.41,10.10 3.08,11.03 0.54,6.26" fill="#8c2c66" stroke="#ebebeb" stroke-width="1.400" stroke-linejoin="round"/><polygon points="9.99,5.04 11.72,7.99 15.13,7.89 12.86,10.44 14.01,13.66 10.88,12.28 8.18,14.37 8.52,10.97 5.69,9.05 9.03,8.32" fill="#5a2c4b" stroke="#ebebeb" stroke-width="1.300" stroke-linejoin="round"/></svg>
<svg width="32" height="32" viewBox="0 0 16 16" style="left:10px;top:696px;overflow:visible;"><path fill="#4a2a40" d="M8 1.500l5.800 3.200L8 8 2.200 4.700z"/><path fill="#e8368f" d="M2.200 4.700L8 8v6.500l-5.800-3.300z"/><path fill="#8c2c66" d="M13.800 4.700L8 8v6.500l5.800-3.300z"/><path fill="none" stroke="#ebebeb" stroke-width="1.700" stroke-linejoin="round" d="M8 1.200l6 3.400v6.800L8 14.800l-6-3.400V4.600z"/><path fill="none" stroke="#ebebeb" stroke-width="1" d="M2.500 4.900L8 8l5.500-3.100M8 8v6.500"/></svg>
<svg width="32" height="32" viewBox="0 0 16 16" style="left:10px;top:760px;overflow:visible;"><path fill="none" stroke="#ebebeb" stroke-width="1.700" stroke-linecap="round" d="M8.200 8.800a.9 .9 0 0 1 -1.200 -1.200 2.300 2.300 0 0 1 3.500 .2 3.600 3.600 0 0 1 -.6 5 5 5 0 0 1 -7 -1 6.400 6.400 0 0 1 1.800 -8.900 7 7 0 0 1 9.200 2.600c1.400 2.500 1.300 5.800 -.2 8.200"/></svg>
<svg width="32" height="32" viewBox="0 0 16 16" style="left:10px;top:830px;overflow:visible;"><circle cx="2.200" cy="2.800" r="1.900" fill="#41a132"/><path fill="#41a132" d="M.2 9.500h4v4h-4z"/><path stroke="#41a132" stroke-width="1" d="M2.200 3v8"/><path fill="none" stroke="#8b8b8b" stroke-width=".9" d="M3 9.500C3.500 5.500 7 2.300 12 2.100"/><path fill="#ebebeb" d="M12.600 4.200L16 5.900v3.300l-2.400 4.300L5.200 16.200l-.3-.4L7.600 7.800z"/><path fill="#353535" d="M10.600 7.600L8 12.800l4.300-1.900 1.200-2.200z"/><path stroke="#ebebeb" stroke-width="1" d="M5.400 15.800L10.400 10.600"/><circle cx="10.900" cy="10.100" r="1.150" fill="#ebebeb"/></svg>
<svg width="32" height="32" viewBox="0 0 16 16" style="left:10px;top:894px;overflow:visible;"><path fill="none" stroke="#41a132" stroke-width="1.400" stroke-linecap="round" d="M1.500 9.500c-1-2.500.5-3 2.500-3.800s4.500-1.500 3.500-3.700-3.500-1.700-5-.3"/><path fill="#41a132" d="M4.200 12.200l2.800 2.500-4.800 1.800z"/><path fill="#ebebeb" d="M12.300 2.800l2.900 2.600L8.200 13.300 5.300 10.700z"/><path fill="#ebebeb" d="M13 2l.8-.8a1.200 1.200 0 0 1 1.700 0l1 1a1.200 1.200 0 0 1 0 1.700l-.7.8z"/></svg>
<svg width="32" height="32" viewBox="0 0 16 16" style="left:10px;top:958px;overflow:visible;"><path fill="none" stroke="#41a132" stroke-width="1.400" stroke-linecap="round" d="M3.800 1c2.300 1.800 2 4.300 .2 5S.8 6.500 1.600 8.500"/><path fill="#41a132" d="M5 10.800l1.600 1.500c-.6 1.700-3.400 3-5.900 2.900 1.700-.9 2.200-3.200 4.300-4.400z"/><path fill="#ebebeb" d="M15.500 1l.6.600L8.800 10 7.200 8.600z"/><path fill="#ebebeb" d="M6.600 9.200l1.800 1.600-1 1.100-1.700-1.600z"/></svg>
<span class="t " style="left:9.8px;top:1016.5px;font-size:36.00px;line-height:46px;color:#ebebeb;font-weight:700;letter-spacing:0.000px;transform:scaleX(0.9808);transform-origin:0 50%;-webkit-text-stroke:1.2px #ebebeb;">A</span>
<div style="left:38.0px;top:1022.0px;width:4.0px;height:32.0px;background:#41a132"></div>
<svg width="32" height="32" viewBox="0 0 16 16" style="left:10px;top:1092px;overflow:visible;"><defs><linearGradient id="ggr" x1="0" y1="0" x2="1" y2="1"><stop offset="0" stop-color="#2f8fe8"/><stop offset=".6" stop-color="#8cc4ea"/><stop offset="1" stop-color="#f4f4f4"/></linearGradient></defs><path fill="url(#ggr)" d="M2 2h12v12H2z"/><path fill="none" stroke="#ebebeb" stroke-width="1" d="M.5 .5h15v15H.5z"/></svg>
<svg width="32" height="32" viewBox="0 0 16 16" style="left:10px;top:1156px;overflow:visible;"><defs><radialGradient id="gms"><stop offset="0" stop-color="#49a0f0"/><stop offset=".6" stop-color="#2a5f9a"/><stop offset="1" stop-color="#353535"/></radialGradient></defs><path fill="url(#gms)" d="M1 1h14v14H1z"/><path fill="none" stroke="#ebebeb" stroke-width="1" d="M.5 .5h15v15H.5z"/><path fill="none" stroke="#ebebeb" stroke-width="1.200" d="M1 9c3 .5 6 0 7-1s1.500-4-1-7M15 7c-3-.5-6 0-7 1s-1.500 4 1 7"/></svg>
<svg width="32" height="32" viewBox="0 0 16 16" style="left:10px;top:1220px;overflow:visible;"><path fill="#3b8fde" d="M3.5 0.5c1.300 2 2.500 3.300 2.500 4.700a2.500 2.500 0 0 1 -5 0c0-1.400 1.200-2.700 2.500-4.700z"/><path fill="none" stroke="#ebebeb" stroke-width="1.300" stroke-linecap="round" d="M10 6.500l-6.300 6.300a1 1 0 0 0 1.500 1.500L11.500 8"/><path fill="#ebebeb" d="M9 4.500l1-1 .8 .8 2-2a1.600 1.600 0 0 1 2.300 2.300l-2 2 .8 .8-1 1z"/></svg>
<svg width="32" height="32" viewBox="0 0 16 16" style="left:10px;top:1284px;overflow:visible;"><path fill="#3b8fde" d="M3.5 8.8c1.300 2 2.500 3.300 2.500 4.700a2.500 2.500 0 0 1 -5 0c0-1.400 1.200-2.700 2.500-4.700z"/><path fill="none" stroke="#ebebeb" stroke-width="1.200" stroke-linejoin="round" d="M10.300 1L4.500 7l6 6 5-5z"/><path fill="#ebebeb" d="M6 7.500h9l-4.500 5z"/><path stroke="#ebebeb" stroke-width="1" d="M10 1.200l2-1"/></svg>
<svg width="32" height="32" viewBox="0 0 16 16" style="left:10px;top:1354px;overflow:visible;"><g transform="translate(0 1.3) scale(1 .86)"><path fill="#ebebeb" d="M1 16V10.500c3 0 4-1 5-3.500C7.500 3.300 10 1.700 12.500 2.300c1.800 .4 2.800 1.700 2.700 3.200-1-1-2.600-1.100-3.500-.3-1 .9-1 2.500 0 3.400 .9 .8 2.300 .9 3.300 .3V16z"/></g></svg>
<svg width="32" height="32" viewBox="0 0 16 16" style="left:10px;top:1418px;overflow:visible;"><g transform="translate(.3 -.7) scale(.97 .98)"><path fill="#ebebeb" d="M6.500 16V10.500c0-1.200 .9-2 2-2h4.500c1.100 0 2 .8 2 2V16z"/><path fill="#ebebeb" d="M8.500 6.500h5l.5 1.300H8z"/><path fill="#ebebeb" d="M9.800 4.200a1.200 1.200 0 0 1 2.400 0v1.300H9.800z"/><g fill="#8b8b8b"><circle cx="3.500" cy="3.200" r="1.300"/><circle cx="1.800" cy="5.800" r="1.200"/><circle cx="3.700" cy="8.500" r="1.600"/><circle cx="5.300" cy="5.500" r=".8"/><circle cx="6.500" cy="3.600" r=".7"/><circle cx="6.300" cy="7.400" r=".9"/><circle cx="7.800" cy="5" r=".5"/></g></g></svg>
<svg width="32" height="32" viewBox="0 0 16 16" style="left:10px;top:1482px;overflow:visible;"><g transform="translate(.6 .6) scale(.9 .9)"><path fill="#ebebeb" d="M11.800 .8l4 4-5.200 5.200-4-4z"/><path fill="#8b8b8b" d="M6 6.600l4 4-2.800 2.800-4-4z"/><path fill="#ebebeb" d="M1 14h3v2H1zM9.500 14H16v2H9.500z"/></g></svg>
<svg width="32" height="32" viewBox="0 0 16 16" style="left:10px;top:1546px;overflow:visible;"><g transform="translate(.3 1) scale(.91 .9)"><path fill="none" stroke="#ebebeb" stroke-width="2" d="M1 2.500c5.500 0 4 8 10 8"/><path fill="#ebebeb" d="M10.500 5.500l5.500 5-5.500 5z"/></g></svg>
<svg width="32" height="32" viewBox="0 0 16 16" style="left:10px;top:1616px;overflow:visible;"><path fill-rule="evenodd" fill="#ebebeb" d="M2.900 1.200H10a3 3 0 0 1 3 3V13.900a.8 .8 0 0 1 -.8 .8H2.900a.8 .8 0 0 1 -.8 -.8V2a.8 .8 0 0 1 .8 -.8zM4 3.100v1h3.500v1H4v1.300h2v1H4V8.700h3.500v1H4V11h2v1H4v.9h7.100V4.200a1.100 1.100 0 0 0 -1.100 -1.100z"/></svg>
<svg width="32" height="32" viewBox="0 0 16 16" style="left:10px;top:1680px;overflow:visible;"><circle cx="7.100" cy="7.100" r="4.850" fill="none" stroke="#ebebeb" stroke-width="1.800"/><path stroke="#ebebeb" stroke-width="2.100" stroke-linecap="round" d="M11 11L14.600 14.600"/></svg>
<svg width="32" height="32" viewBox="0 0 16 16" style="left:10px;top:1744px;overflow:visible;"><path fill="none" stroke="#ebebeb" stroke-width="1.900" stroke-linejoin="round" d="M1 16V7.300h6.300l2.400 2.400V16"/><path fill="none" stroke="#ebebeb" stroke-width="1.900" stroke-linejoin="round" d="M6.500 2.300h6.300l2.700 2.700V14.400h-2.700"/></svg>
<svg width="28" height="28" viewBox="0 0 16 16" style="left:80.5px;top:297px;overflow:visible;"><path fill="#ebebeb" d="M1.500 8h9.500v8H1.500z"/><path fill="none" stroke="#ebebeb" stroke-width="2" d="M8.300 8V5a3 3 0 0 1 6 0V7"/></svg>
<svg width="30" height="28" viewBox="0 0 30 28" style="left:2134px;top:298px"><rect x="1.500" y="1.500" width="25" height="17" rx="2.500" fill="none" stroke="#ebebeb" stroke-width="2.200"/><path fill="#ebebeb" d="M9 20h10v2.500h-10zM5 22.500h18v1.600H5z"/></svg>
<svg width="32" height="32" viewBox="0 0 16 16" style="left:2236px;top:321px;overflow:visible;"><path fill="#3b8fde" d="M2.500 2H12l-2.500 3H0z"/><path fill="#8cc4ea" d="M4.500 7H14l-2.500 3H2z"/><path fill="#ebebeb" d="M6.500 12H16l-2.500 3H4z"/></svg>
<svg width="20" height="20" viewBox="0 0 20 20" style="left:2282px;top:327px"><path d="M3 3l14 14M17 3L3 17" stroke="#b4b4b4" stroke-width="4"/></svg>
<svg width="32" height="32" viewBox="0 0 16 16" style="left:2375px;top:321px;overflow:visible;"><path fill="none" stroke="#ebebeb" stroke-width="1" d="M.5 12V.5H12"/><path fill="#ebebeb" d="M15.300 1.200l.6 .6L8.600 10.200 7 8.800z"/><path fill="#ebebeb" d="M6.400 9.400l1.800 1.600-1 1.100-1.700-1.600z"/><path fill="#3b8fde" d="M4.800 11.100l1.600 1.500c-.6 1.700-3.400 3-5.900 2.900 1.700-.9 2.200-3.200 4.300-4.400z"/></svg>
<svg width="32" height="32" viewBox="0 0 16 16" style="left:2504px;top:321px;overflow:visible;"><path fill-rule="evenodd" fill="#ebebeb" d="M.8 0H8l4 4v3h-2V6H7V2H2v11h8v-2h2v3.200a.8 .8 0 0 1 -.8 .8H.8a.8 .8 0 0 1 -.8 -.8V.8A.8 .8 0 0 1 .8 0z"/><path fill="#41a132" d="M7 8h6V6l3 3-3 3v-2H7z"/></svg>
<svg width="32" height="32" viewBox="0 0 16 16" style="left:2632px;top:321px;overflow:visible;"><path fill="#41a132" d="M1 1h1v13H1z"/><path fill="#ebebeb" d="M4 1h7v3H4zM4 6h10v3H4zM4 11h6v3H4z"/></svg>
<svg width="32" height="32" viewBox="0 0 16 16" style="left:2760px;top:322px;overflow:visible;"><path fill="#ebebeb" d="M0 9h7v7H0z"/><g fill="#41a132"><path d="M4.500 3.200L6 1.700l6 6-1.500 1.500z"/><path d="M2 3.500L4.200 5.700l1.300-1.300L3.300 2.200A3.200 3.200 0 0 1 7.500 6.400L6 7.700l-1.500.5A3.200 3.200 0 0 1 2 3.500z" transform="translate(-1.200 -1.700)"/><path d="M15 10.200L12.800 8l-1.300 1.300 2.200 2.200A3.200 3.200 0 0 1 9.500 7.300L11 6l1.500-.5a3.200 3.200 0 0 1 2.500 4.700z" transform="translate(1 1)"/></g></svg>
<svg width="32" height="32" viewBox="0 0 32 32" style="left:2216px;top:392px"><path d="M18 4h4v6h6v4h-6v6h-4v-6h-6v-4h6z" fill="#41a132"/><path d="M8 24h22l-6 6H2z" fill="#ebebeb"/></svg>
<svg width="26" height="30" viewBox="0 0 26 30" style="left:2237px;top:461px"><path d="M3 1.500h12l8.500 8.500v17a1.500 1.500 0 0 1 -1.500 1.500H3A1.500 1.500 0 0 1 1.500 27V3A1.500 1.500 0 0 1 3 1.500z" fill="none" stroke="#4a86f2" stroke-width="3"/><path d="M14 2v9h9" fill="none" stroke="#4a86f2" stroke-width="3"/></svg>
<svg width="36" height="30" viewBox="0 0 36 30" style="left:665px;top:1864px"><path d="M2 17c4-6.500 9.500-9.500 16-9.500S30 10.500 34 17c-4 6.500-9.500 9.500-16 9.500S6 23.500 2 17z" fill="none" stroke="#ebebeb" stroke-width="3.200"/><circle cx="18" cy="17" r="5.500" fill="#ebebeb"/><path d="M8 3.500l3 4.500M18 1v5M28 3.500l-3 4.500" stroke="#ebebeb" stroke-width="3" stroke-linecap="round"/></svg>
<svg width="30" height="30" viewBox="0 0 16 16" style="left:740px;top:1862px;overflow:visible;"><path fill="#ebebeb" d="M1.500 8h9.500v8H1.500z"/><path fill="none" stroke="#ebebeb" stroke-width="2" d="M8.300 8V5a3 3 0 0 1 6 0V7"/></svg>
<svg width="60" height="26" viewBox="0 0 60 26" style="left:2860px;top:368px"><path d="M2 25L37 1.700 47.300 25z" fill="#363636" stroke="#1d1d1d" stroke-width="2"/></svg>
<div style="left:2286.5px;top:390.5px;width:629.0px;height:1194.0px;background:#363636;border:2px solid #1d1d1d;box-shadow:0 3px 9px rgba(0,0,0,.35);"></div>
<div style="left:2865.5px;top:391.0px;width:39.5px;height:2.5px;background:#363636"></div>
<span class="t " style="left:2308.5px;top:414.5px;font-size:25.50px;line-height:33px;color:#f2f2f2;letter-spacing:0.000px;transform:scaleX(0.9803);transform-origin:0 50%;">Close Current Tab</span>
<span class="t " style="left:2308.5px;top:462.5px;font-size:25.50px;line-height:33px;color:#f2f2f2;letter-spacing:0.000px;transform:scaleX(0.9491);transform-origin:0 50%;">Close Panel</span>
<span class="t " style="left:2308.5px;top:511.5px;font-size:25.50px;line-height:33px;color:#f2f2f2;letter-spacing:0.000px;transform:scaleX(0.9684);transform-origin:0 50%;">Move Tab to New Window</span>
<div style="left:2302.0px;top:558.0px;width:598.0px;height:2.0px;background:#3f3f3f"></div>
<div style="left:2302.0px;top:1002.5px;width:598.0px;height:2.0px;background:#3f3f3f"></div>
<div style="left:2302.0px;top:1306.0px;width:598.0px;height:2.0px;background:#3f3f3f"></div>
<div style="left:2302.0px;top:1463.0px;width:598.0px;height:2.0px;background:#3f3f3f"></div>
<span class="t " style="left:2308.5px;top:576.0px;font-size:20.00px;line-height:26px;color:#8d8d8d;font-weight:700;letter-spacing:0.000px;transform:scaleX(0.9883);transform-origin:0 50%;">BASIC</span>
<span class="t " style="left:2308.5px;top:1022.0px;font-size:20.00px;line-height:26px;color:#8d8d8d;font-weight:700;letter-spacing:0.000px;transform:scaleX(1.0102);transform-origin:0 50%;">ADVANCED</span>
<span class="t " style="left:2308.5px;top:1324.0px;font-size:20.00px;line-height:26px;color:#8d8d8d;font-weight:700;letter-spacing:0.000px;transform:scaleX(1.0399);transform-origin:0 50%;">SETTINGS</span>
<span class="t " style="left:2308.5px;top:1481.5px;font-size:20.00px;line-height:26px;color:#8d8d8d;font-weight:700;letter-spacing:0.000px;transform:scaleX(1.0473);transform-origin:0 50%;">DIAGNOSTIC</span>
<div style="left:2296.0px;top:1362.0px;width:312.0px;height:47.5px;background:#29529a"></div>
<svg width="32" height="32" viewBox="0 0 16 16" style="left:2308px;top:622px;overflow:visible;"><path fill="#41a132" d="M1 1h1v13H1z"/><path fill="#ebebeb" d="M4 1h7v3H4zM4 6h10v3H4zM4 11h6v3H4z"/></svg>
<span class="t " style="left:2356.0px;top:621.2px;font-size:25.50px;line-height:33px;color:#f2f2f2;letter-spacing:0.000px;transform:scaleX(0.9882);transform-origin:0 50%;">Align and Distribute</span>
<svg width="32" height="32" viewBox="0 0 16 16" style="left:2308px;top:670px;overflow:visible;"><path fill="none" stroke="#ebebeb" stroke-width="1" d="M.5 .5h15v15H.5z"/><path fill="#ebebeb" d="M2 2h12v2H2z"/><path fill="#ebebeb" d="M2 6h5v3.500H2z"/><path fill="#41a132" d="M7 8.500h7V14H7z"/></svg>
<span class="t " style="left:2356.0px;top:669.3px;font-size:25.50px;line-height:33px;color:#f2f2f2;letter-spacing:0.000px;transform:scaleX(0.9780);transform-origin:0 50%;">Create Tiled Clones</span>
<svg width="32" height="32" viewBox="0 0 16 16" style="left:2308px;top:718px;overflow:visible;"><path fill="#727272" stroke="#ebebeb" stroke-width="1.200" stroke-linejoin="round" d="M5.500 4.500c-.8-1.600 0-3.300 1.700-3.300s2.500 1.700 1.700 3.300H12.500V8c1.600-.8 3.200 0 3.200 1.700s-1.600 2.500-3.200 1.700v3.800H9.200c.5-1.500-.3-2.700-1.700-2.700s-2.200 1.200-1.700 2.700H2.300v-3.800c-1.600 .8-2.100-.3-2.100-1.700s.6-2.400 2.100-1.700V4.500z"/></svg>
<span class="t " style="left:2356.0px;top:717.3px;font-size:25.50px;line-height:33px;color:#f2f2f2;letter-spacing:0.000px;transform:scaleX(0.9673);transform-origin:0 50%;">Extension Gallery</span>
<svg width="32" height="32" viewBox="0 0 16 16" style="left:2308px;top:766px;overflow:visible;"><circle cx="6.600" cy="6.600" r="5.300" fill="none" stroke="#ebebeb" stroke-width="2"/><path stroke="#ebebeb" stroke-width="2.300" stroke-linecap="round" d="M10.800 10.800L14.500 14.500"/></svg>
<span class="t " style="left:2356.0px;top:765.4px;font-size:25.50px;line-height:33px;color:#f2f2f2;letter-spacing:0.000px;transform:scaleX(0.9731);transform-origin:0 50%;">Find/Replace</span>
<svg width="32" height="32" viewBox="0 0 16 16" style="left:2308px;top:814px;overflow:visible;"><path fill="#3b8fde" d="M2.500 2H12l-2.500 3H0z"/><path fill="#8cc4ea" d="M4.500 7H14l-2.500 3H2z"/><path fill="#ebebeb" d="M6.500 12H16l-2.500 3H4z"/></svg>
<span class="t " style="left:2356.0px;top:813.5px;font-size:25.50px;line-height:33px;color:#f2f2f2;letter-spacing:0.000px;transform:scaleX(0.9605);transform-origin:0 50%;">Layers and Objects</span>
<svg width="32" height="32" viewBox="0 0 16 16" style="left:2308px;top:862px;overflow:visible;"><path fill="#e8368f" stroke="#ebebeb" stroke-width="1.300" stroke-linejoin="round" d="M8 13.800C5 11.500 1.900 9.300 1.900 6.300 1.900 4.300 3.300 3 5 3c1.300 0 2.400 .7 3 1.800C8.600 3.700 9.700 3 11 3c1.700 0 3.100 1.300 3.100 3.300 0 3-3.100 5.200-6.100 7.500z"/></svg>
<span class="t " style="left:2356.0px;top:861.6px;font-size:25.50px;line-height:33px;color:#f2f2f2;letter-spacing:0.000px;transform:scaleX(0.9716);transform-origin:0 50%;">Symbols</span>
<svg width="32" height="32" viewBox="0 0 16 16" style="left:2308px;top:910px;overflow:visible;"><path fill="none" stroke="#41a132" stroke-width="1" d="M1.500 2.500h13v11h-13z"/><path fill="#41a132" d="M4 11.500l3-4 3 4z"/><circle cx="10.500" cy="6" r="1.300" fill="#41a132"/></svg>
<span class="t " style="left:2356.0px;top:909.6px;font-size:25.50px;line-height:33px;color:#f2f2f2;letter-spacing:0.000px;transform:scaleX(0.9889);transform-origin:0 50%;">Trace Bitmap</span>
<svg width="32" height="32" viewBox="0 0 16 16" style="left:2308px;top:958px;overflow:visible;"><path fill="#ebebeb" d="M0 10.500L5 6v3h7v7H8.500v-3.500H5v2.500z"/><circle cx="10.500" cy="5.500" r="5.500" fill="#363636"/><circle cx="10.500" cy="5.500" r="5.200" fill="#3c98ea"/><path fill="none" stroke="#353535" stroke-width="1.100" d="M11 2.500v3.500H8"/></svg>
<span class="t " style="left:2356.0px;top:957.7px;font-size:25.50px;line-height:33px;color:#f2f2f2;letter-spacing:0.000px;transform:scaleX(0.9873);transform-origin:0 50%;">Undo History</span>
<svg width="32" height="32" viewBox="0 0 16 16" style="left:2620px;top:622px;overflow:visible;"><text x="0.3" y="11" font-family="Liberation Sans, sans-serif" font-weight="700" font-size="11.500" fill="#ebebeb" stroke="#ebebeb" stroke-width=".3" textLength="14.800" lengthAdjust="spacingAndGlyphs">ab</text><path fill="none" stroke="#ebebeb" stroke-width="1.100" d="M.3 14.800l2.200-1.900 2.200 1.900 2.200-1.900 2.200 1.900 2.200-1.900 2.200 1.900 2.200-1.900"/></svg>
<span class="t " style="left:2668.0px;top:621.2px;font-size:25.50px;line-height:33px;color:#f2f2f2;letter-spacing:0.000px;transform:scaleX(0.9918);transform-origin:0 50%;">Check Spelling</span>
<svg width="32" height="32" viewBox="0 0 16 16" style="left:2620px;top:670px;overflow:visible;"><path fill-rule="evenodd" fill="#ebebeb" d="M.8 0H8l4 4v3h-2V6H7V2H2v11h8v-2h2v3.200a.8 .8 0 0 1 -.8 .8H.8a.8 .8 0 0 1 -.8 -.8V.8A.8 .8 0 0 1 .8 0z"/><path fill="#41a132" d="M7 8h6V6l3 3-3 3v-2H7z"/></svg>
<span class="t " style="left:2668.0px;top:669.3px;font-size:25.50px;line-height:33px;color:#f2f2f2;letter-spacing:0.000px;transform:scaleX(0.9675);transform-origin:0 50%;">Export</span>
<svg width="32" height="32" viewBox="0 0 16 16" style="left:2620px;top:718px;overflow:visible;"><path fill="none" stroke="#ebebeb" stroke-width="1" d="M.5 12V.5H12"/><path fill="#ebebeb" d="M15.300 1.200l.6 .6L8.600 10.200 7 8.800z"/><path fill="#ebebeb" d="M6.400 9.400l1.800 1.600-1 1.100-1.700-1.600z"/><path fill="#3b8fde" d="M4.800 11.100l1.600 1.500c-.6 1.700-3.400 3-5.900 2.900 1.700-.9 2.200-3.200 4.300-4.400z"/></svg>
<span class="t " style="left:2668.0px;top:717.3px;font-size:25.50px;line-height:33px;color:#f2f2f2;letter-spacing:0.000px;transform:scaleX(0.9572);transform-origin:0 50%;">Fill and Stroke</span>
<svg width="32" height="32" viewBox="0 0 16 16" style="left:2620px;top:766px;overflow:visible;"><path fill="none" stroke="#ebebeb" stroke-width="1" d="M.5 .5h15v15H.5z"/><path fill="#ebebeb" d="M2 2h12v2H2z"/><path fill="#3b8fde" d="M2.500 10c1.300-2 3.300-3.200 5.500-3.200s4.200 1.200 5.500 3.200c-1.300 2-3.300 3.200-5.500 3.200S3.800 12 2.500 10z"/><circle cx="8" cy="10" r="2.100" fill="#363636"/><circle cx="8" cy="10" r="1" fill="#3b8fde"/></svg>
<span class="t " style="left:2668.0px;top:765.4px;font-size:25.50px;line-height:33px;color:#f2f2f2;letter-spacing:0.000px;transform:scaleX(0.9796);transform-origin:0 50%;">Icon Preview</span>
<svg width="32" height="32" viewBox="0 0 16 16" style="left:2620px;top:814px;overflow:visible;"><path fill="#41a132" d="M0 0h7v7H0z"/><path fill="#e8368f" d="M9 0h7v7H9z"/><path fill="none" stroke="#ebebeb" stroke-width="1" d="M.5 9.500h6v6h-6zM9.500 9.500h6v6h-6z"/><path fill="#3b8fde" d="M2.200 11.200h2.600v2.600H2.200z"/><path fill="#ebebeb" d="M11.200 11.200h2.600v2.600h-2.600z"/></svg>
<span class="t " style="left:2668.0px;top:813.5px;font-size:25.50px;line-height:33px;color:#f2f2f2;letter-spacing:0.000px;transform:scaleX(0.9860);transform-origin:0 50%;">Swatches</span>
<svg width="32" height="32" viewBox="0 0 16 16" style="left:2620px;top:862px;overflow:visible;"><path fill="#ebebeb" d="M2 2h12v2.600h-.8c-.2-1-.6-1.300-1.600-1.300H9.300v9.200c0 .6.300.8 1.300.9v.6H5.400v-.6c1-.1 1.300-.3 1.300-.9V3.300H4.400c-1 0-1.400.3-1.600 1.300H2z"/></svg>
<span class="t " style="left:2668.0px;top:861.6px;font-size:25.50px;line-height:33px;color:#f2f2f2;letter-spacing:0.000px;transform:scaleX(0.9657);transform-origin:0 50%;">Text and Font</span>
<svg width="32" height="32" viewBox="0 0 16 16" style="left:2620px;top:910px;overflow:visible;"><path fill="none" stroke="#ebebeb" stroke-width="1.800" d="M2.900 7.300A6.100 6.100 0 1 1 7.300 13.300"/><path fill="#ebebeb" d="M.3 6.700h5.200L2.900 10.300z"/><circle cx="8.900" cy="7.400" r="2" fill="#41a132"/><path fill="#ebebeb" d="M0 11.200h6V16H0z"/></svg>
<span class="t " style="left:2668.0px;top:909.6px;font-size:25.50px;line-height:33px;color:#f2f2f2;letter-spacing:0.000px;transform:scaleX(0.9980);transform-origin:0 50%;">Transform</span>
<svg width="32" height="32" viewBox="0 0 16 16" style="left:2620px;top:958px;overflow:visible;"><rect x="1.750" y="1.750" width="12.500" height="12.500" rx="2.200" fill="none" stroke="#ebebeb" stroke-width="1.500"/><path fill="none" stroke="#ebebeb" stroke-width="1.300" d="M5.500 7.500h4.200a1 1 0 0 1 1 1v3.800H6.500a1.200 1.200 0 0 1 0-2.500h4.200M8.500 5.500l3-1.800"/></svg>
<span class="t " style="left:2668.0px;top:957.7px;font-size:25.50px;line-height:33px;color:#f2f2f2;letter-spacing:0.000px;transform:scaleX(0.9994);transform-origin:0 50%;">Unicode Characters</span>
<svg width="32" height="32" viewBox="0 0 16 16" style="left:2308px;top:1068px;overflow:visible;"><path fill="#ebebeb" d="M1.400 4.500L4.800 5.500V16.100L1.400 14.600z"/><path fill="#ebebeb" d="M2.300 3.900L10.600 .6l3.200 .8L5.200 4.800z"/><path fill="#ebebeb" d="M5.500 5.700L14.200 2.200V12.400L5.500 16z"/><g fill="none" stroke="#363636" stroke-width=".95"><path d="M6.600 6.800l6.500-2.600v2.100l-6.500 2.600zM6.600 10.100l6.500-2.600v2.100l-6.500 2.600zM6.600 13.400l6.500-2.600v2.100l-6.500 2.600z"/></g><path fill="#363636" d="M8.700 6.500l2.300-.9v1l-2.300 .9zM8.700 9.800l2.300-.9v1l-2.300 .9zM8.700 13.100l2.300-.9v1l-2.300 .9z"/></svg>
<span class="t " style="left:2356.0px;top:1067.4px;font-size:25.50px;line-height:33px;color:#f2f2f2;letter-spacing:0.000px;transform:scaleX(0.9736);transform-origin:0 50%;">Document Resources</span>
<svg width="32" height="32" viewBox="0 0 16 16" style="left:2308px;top:1116px;overflow:visible;"><g stroke="#dcdcdc" stroke-width=".45"><circle cx="5.300" cy="4.300" r="2.600" fill="#a89a8a"/><circle cx="10.500" cy="4.300" r="2.600" fill="#dad7ba"/><circle cx="13.100" cy="8.700" r="2.600" fill="#7b646a"/><circle cx="10.500" cy="13.100" r="2.600" fill="#6f8f74"/><circle cx="5.300" cy="13.100" r="2.600" fill="#8fb0bd"/><circle cx="2.800" cy="8.700" r="2.600" fill="#5a6e94"/></g><circle cx="7.950" cy="8.700" r="1.500" fill="#363636" stroke="#dcdcdc" stroke-width=".5"/></svg>
<span class="t " style="left:2356.0px;top:1115.5px;font-size:25.50px;line-height:33px;color:#f2f2f2;letter-spacing:0.000px;transform:scaleX(0.9930);transform-origin:0 50%;">Filter Gallery</span>
<svg width="32" height="32" viewBox="0 0 16 16" style="left:2308px;top:1164px;overflow:visible;"><g transform="translate(2.300 14.800) rotate(47)"><path fill="none" stroke="#ebebeb" stroke-width="2.300" stroke-linecap="round" d="M0 0V-6.500"/><circle cx="0" cy="-.1" r=".6" fill="#363636"/><path fill="#ebebeb" d="M-2.900 -10.300h5.800v3.300a1 1 0 0 1 -1 1h-3.800a1 1 0 0 1 -1 -1z"/><path fill="#ebebeb" d="M-3.700 -16.300L-2 -16.900l.6 2.200 1-2.600 1.600 .1 .5 2.500 1-2.300 1.700 .7L3.200 -11h-6.400z"/></g></svg>
<span class="t " style="left:2356.0px;top:1163.5px;font-size:25.50px;line-height:33px;color:#f2f2f2;letter-spacing:0.000px;transform:scaleX(0.9604);transform-origin:0 50%;">Paint Servers</span>
<svg width="32" height="32" viewBox="0 0 16 16" style="left:2308px;top:1212px;overflow:visible;"><path fill="none" stroke="#ebebeb" stroke-width="1" d="M.5 .5h15v15H.5z"/><path fill="#e8368f" d="M2 2h12v2H2z"/><path fill="none" stroke="#ebebeb" stroke-width="1.300" d="M6.500 6c-1.500 0-1.500 .5-1.500 1.500s0 2-1.500 2c1.500 0 1.500 1 1.500 2s0 1.500 1.500 1.500M9.500 6c1.500 0 1.500 .5 1.500 1.500s0 2 1.500 2c-1.500 0-1.500 1-1.500 2s0 1.500-1.500 1.500"/></svg>
<span class="t " style="left:2356.0px;top:1211.6px;font-size:25.50px;line-height:33px;color:#f2f2f2;letter-spacing:0.000px;transform:scaleX(0.9641);transform-origin:0 50%;">Selectors and CSS</span>
<svg width="32" height="32" viewBox="0 0 16 16" style="left:2308px;top:1260px;overflow:visible;"><path fill="none" stroke="#ebebeb" stroke-width="1" d="M.5 .5h15v15H.5z"/><path fill="#41a132" d="M2 2h12v2H2z"/><path fill="none" stroke="#ebebeb" stroke-width="1.300" d="M6.500 7L3 10l3.500 3M9.500 7L13 10l-3.500 3"/></svg>
<span class="t " style="left:2356.0px;top:1259.7px;font-size:25.50px;line-height:33px;color:#f2f2f2;letter-spacing:0.000px;transform:scaleX(0.9530);transform-origin:0 50%;">XML Editor</span>
<svg width="32" height="32" viewBox="0 0 16 16" style="left:2620px;top:1068px;overflow:visible;"><clipPath id="cg"><path d="M0 0h16v8.200H0z"/></clipPath><g clip-path="url(#cg)"><polygon points="0.83,9.13 0.83,7.87 2.84,7.31 3.12,6.43 1.83,4.80 2.57,3.77 4.52,4.50 5.27,3.96 5.18,1.87 6.39,1.48 7.53,3.22 8.47,3.22 9.61,1.48 10.82,1.87 10.73,3.96 11.48,4.50 13.43,3.77 14.17,4.80 12.88,6.43 13.16,7.31 15.17,7.87 15.17,9.13 13.16,9.69 12.88,10.57 14.17,12.20 13.43,13.23 11.48,12.50 10.73,13.04 10.82,15.13 9.61,15.52 8.47,13.78 7.53,13.78 6.39,15.52 5.18,15.13 5.27,13.04 4.52,12.50 2.57,13.23 1.83,12.20 3.12,10.57 2.84,9.69" fill="#ebebeb"/><circle cx="8" cy="8.500" r="2.500" fill="#363636"/></g><path fill="#3b8fde" d="M1 9.500h14V16H1z"/><text x="1.600" y="15" font-family="Liberation Sans, sans-serif" font-weight="700" font-size="6.200" fill="#1d2b3a">10</text><path fill="#1d2b3a" d="M11 12.300l1.800-2 1.800 2zM11 13.300l1.800 2 1.800-2z"/></svg>
<span class="t " style="left:2668.0px;top:1067.4px;font-size:25.50px;line-height:33px;color:#f2f2f2;letter-spacing:0.000px;transform:scaleX(0.9796);transform-origin:0 50%;">Filter Editor</span>
<svg width="32" height="32" viewBox="0 0 16 16" style="left:2620px;top:1116px;overflow:visible;"><path fill="#ebebeb" d="M1 2.200a.5 .5 0 0 1 .5-.5H6l1.500 1.700h6.500a.5 .5 0 0 1 .5 .5v8.300H1z"/><text x="4.200" y="16" font-family="Liberation Sans, sans-serif" font-weight="700" font-size="14.600" fill="#363636" stroke="#363636" stroke-width="2.400">A</text><text x="4.200" y="16" font-family="Liberation Sans, sans-serif" font-weight="700" font-size="14.600" fill="#ebebeb" stroke="#ebebeb" stroke-width=".35">A</text></svg>
<span class="t " style="left:2668.0px;top:1115.5px;font-size:25.50px;line-height:33px;color:#f2f2f2;letter-spacing:0.000px;transform:scaleX(0.9911);transform-origin:0 50%;">Font Collections</span>
<svg width="32" height="32" viewBox="0 0 16 16" style="left:2620px;top:1164px;overflow:visible;"><path fill="none" stroke="#ebebeb" stroke-width="1.300" d="M3 13.500c-1-5 1-8.500 5.500-9.500s5-1.500 5.500-2.500M4 9.500c1 2 4 2.500 8-1"/><circle cx="3" cy="13.800" r="1.600" fill="#ebebeb"/><circle cx="14.300" cy="1.700" r="1.300" fill="#ebebeb"/><circle cx="12.500" cy="8" r="1.300" fill="#ebebeb"/></svg>
<span class="t " style="left:2668.0px;top:1163.5px;font-size:25.50px;line-height:33px;color:#f2f2f2;letter-spacing:0.000px;transform:scaleX(0.9692);transform-origin:0 50%;">Path Effects</span>
<svg width="32" height="32" viewBox="0 0 16 16" style="left:2620px;top:1212px;overflow:visible;"><path fill="none" stroke="#ebebeb" stroke-width="2.500" d="M4.700 1.900h6.600v2.600H7.500v2.800h3.100v2.600H7.500v4.500H4.700z"/><path fill="none" stroke="#363636" stroke-width="1.500" d="M4.700 1.900h6.600v2.600H7.500v2.800h3.100v2.600H7.500v4.500H4.700z"/><path fill="#ebebeb" d="M4.700 1.900h6.600v2.600H7.500v2.800h3.100v2.600H7.500v4.500H4.700z"/></svg>
<span class="t " style="left:2668.0px;top:1211.6px;font-size:25.50px;line-height:33px;color:#f2f2f2;letter-spacing:0.000px;transform:scaleX(0.9480);transform-origin:0 50%;">SVG Font Editor</span>
<svg width="32" height="32" viewBox="0 0 16 16" style="left:2308px;top:1370px;overflow:visible;"><path fill="none" stroke="#ebebeb" stroke-width="2.200" stroke-linejoin="round" d="M7.300 13.800H3.100V2h7.200l2.800 2.800v5.200"/><path stroke="#29529a" stroke-width="4.200" d="M8.500 9L12.700 14.200"/><circle cx="8.100" cy="8.500" r="4" fill="#29529a"/><path stroke="#ebebeb" stroke-width="2.300" d="M8.800 9.400L13.500 15.200"/><circle cx="8.100" cy="8.500" r="2.200" fill="none" stroke="#ebebeb" stroke-width="1.900"/><path stroke="#29529a" stroke-width="2" d="M8.100 8.500L4.700 5.100"/></svg>
<span class="t " style="left:2356.0px;top:1369.4px;font-size:25.50px;line-height:33px;color:#f2f2f2;letter-spacing:0.000px;transform:scaleX(0.9920);transform-origin:0 50%;">Document Properties</span>
<svg width="32" height="32" viewBox="0 0 16 16" style="left:2308px;top:1418px;overflow:visible;"><g fill="none" stroke="#ebebeb" stroke-linecap="round"><path stroke-width="2" d="M1.500 14.500L9 7"/><path stroke-width="1.300" d="M9 7l4.500-5.500"/><path stroke-width="2.200" d="M13.200 1.800l1 1"/><path stroke-width="1.800" d="M5 5l8.500 8.500"/></g><path fill="#ebebeb" d="M1 1.800L3.200 4l1.300-1.300L2.300 .5A3.200 3.200 0 0 1 6.500 4.700L5 6 3.500 6.500A3.200 3.200 0 0 1 1 1.800z"/><path fill="#ebebeb" d="M15 14.200L12.800 12l-1.300 1.300 2.200 2.200A3.200 3.200 0 0 1 9.500 11.300L11 10l1.500-.5A3.200 3.200 0 0 1 15 14.200z"/></svg>
<span class="t " style="left:2356.0px;top:1417.5px;font-size:25.50px;line-height:33px;color:#f2f2f2;letter-spacing:0.000px;transform:scaleX(0.9820);transform-origin:0 50%;">Preferences</span>
<svg width="32" height="32" viewBox="0 0 16 16" style="left:2620px;top:1370px;overflow:visible;"><path fill="#ebebeb" d="M0 9h7v7H0z"/><g fill="#41a132"><path d="M4.500 3.200L6 1.700l6 6-1.500 1.500z"/><path d="M2 3.500L4.200 5.700l1.300-1.300L3.300 2.200A3.200 3.200 0 0 1 7.500 6.400L6 7.700l-1.500.5A3.200 3.200 0 0 1 2 3.500z" transform="translate(-1.200 -1.700)"/><path d="M15 10.200L12.800 8l-1.300 1.300 2.200 2.200A3.200 3.200 0 0 1 9.500 7.300L11 6l1.500-.5a3.200 3.200 0 0 1 2.500 4.700z" transform="translate(1 1)"/></g></svg>
<span class="t " style="left:2668.0px;top:1369.4px;font-size:25.50px;line-height:33px;color:#f2f2f2;letter-spacing:0.000px;transform:scaleX(0.9899);transform-origin:0 50%;">Object Properties</span>
<svg width="32" height="32" viewBox="0 0 16 16" style="left:2308px;top:1528px;overflow:visible;"><path fill="none" stroke="#ebebeb" stroke-width="1.300" d="M4 4h8v8H4z"/><path fill="none" stroke="#8b8b8b" stroke-width="2" stroke-dasharray=".6 1" d="M4.500 2h7.500M4.500 14h7.500M2 4.500v7.500M14 4.500v7.500"/></svg>
<span class="t " style="left:2356.0px;top:1527.2px;font-size:25.50px;line-height:33px;color:#f2f2f2;letter-spacing:0.000px;transform:scaleX(0.9728);transform-origin:0 50%;">About Memory</span>
<svg width="32" height="32" viewBox="0 0 16 16" style="left:2620px;top:1528px;overflow:visible;"><path fill="none" stroke="#ebebeb" stroke-width="1" d="M.5 .5h15v15H.5z"/><path fill="#8b8b8b" d="M2 2h12v2H2z"/><path fill="#ebebeb" d="M3 6h10v6h-1.500v2.300L8.800 12H3z"/></svg>
<span class="t " style="left:2668.0px;top:1527.2px;font-size:25.50px;line-height:33px;color:#f2f2f2;letter-spacing:0.000px;transform:scaleX(0.9551);transform-origin:0 50%;">Messages</span>
</div></div>
<svg width="34" height="38.500" viewBox="0 0 30 34" style="left:31.500px;top:11.500px"><path fill="#fff" d="M21.800 17.900c0-3.400 2.800-5 2.900-5.100-1.600-2.300-4-2.600-4.900-2.700-2.100-.2-4.100 1.200-5.100 1.200-1.100 0-2.700-1.200-4.400-1.200-2.300 0-4.400 1.300-5.500 3.400-2.400 4.100-.6 10.100 1.700 13.400 1.100 1.600 2.400 3.400 4.200 3.400 1.700-.1 2.300-1.100 4.400-1.100 2 0 2.600 1.100 4.400 1 1.800 0 3-1.600 4.100-3.300 1.300-1.900 1.800-3.700 1.800-3.800-.1 0-3.600-1.400-3.600-5.200zM18.400 7.900c.9-1.100 1.600-2.700 1.400-4.300-1.300.1-3 .9-3.900 2-.9 1-1.600 2.600-1.400 4.100 1.500.1 3-.7 3.900-1.800z"/></svg>
<svg width="34" height="34" viewBox="0 0 34 34" style="left:1744.500px;top:16px"><circle cx="17" cy="17" r="15" fill="#f4f7f5" stroke="#1b2358" stroke-width="2.600"/><path d="M5 12c6-3 14 0 17 7s-1 11-4 12" fill="none" stroke="#1b2358" stroke-width="2.200"/><path d="M14 3c-3 5-1 10 3 12s9 2 12-1" fill="none" stroke="#7dc242" stroke-width="2"/></svg>
<svg width="33" height="33" viewBox="0 0 40 40" style="left:1815px;top:15.500px"><g stroke="#eef4f1" stroke-linecap="round"><path d="M5 15L35 26" stroke-width="8"/><path d="M25 5L15 35" stroke-width="8"/></g></svg>
<svg width="32" height="32" viewBox="0 0 32 32" style="left:1886px;top:17px"><rect x="3.300" y="3.300" width="25.400" height="25.400" rx="5.500" fill="none" stroke="#eef4f1" stroke-width="2.600"/><circle cx="16" cy="16" r="4.200" fill="#eef4f1"/></svg>
<svg width="44" height="34" viewBox="0 0 44 34" style="left:1956px;top:15px"><g fill="none" stroke="#eef4f1" stroke-width="3"><path d="M12 29a9.500 9.500 0 0 1 -2-18.500A11 11 0 0 1 31 8a9 9 0 0 1 8 6"/><path d="M20 29l-7-7a5.500 5.500 0 0 1 8-8l4 4"/><path d="M22 12a6 6 0 0 1 10-1"/></g><circle cx="33" cy="26.500" r="9" fill="#e24a25"/></svg>
<div style="left:2017.0px;top:7.5px;width:81.0px;height:49.5px;border-radius:25px;background:rgba(190,225,210,.28)"></div>
<svg width="40" height="30" viewBox="0 0 40 30" style="left:2034px;top:15px"><path d="M2 2.500h36M2 27.500h36" stroke="rgba(238,244,241,.75)" stroke-width="2"/><rect x="2.200" y="5.200" width="35.600" height="19.600" rx="2.500" fill="none" stroke="#eef4f1" stroke-width="2.400"/><path d="M7 6v18M3 15h4" stroke="#eef4f1" stroke-width="2"/></svg>
<svg width="40" height="36" viewBox="0 0 40 36" style="left:2110px;top:15px"><g fill="#eef4f1"><path d="M10.500 2L20 8l-9.500 6L1 8zM29.500 2L39 8l-9.500 6L20 8zM10.500 14L20 20l-9.500 6L1 20zM29.500 14L39 20l-9.500 6L20 20zM20 22l8.500 5.500L20 33l-8.500-5.500z"/></g><circle cx="11" cy="27" r="9.600" fill="#e0457b"/></svg>
<span class="t " style="left:2116.0px;top:33.0px;font-size:15.00px;line-height:19px;color:#fff;font-weight:700;">2</span>
<svg width="40" height="26" viewBox="0 0 40 26" style="left:2182px;top:20px"><g fill="none" stroke="#eef4f1" stroke-width="2.600"><circle cx="10.500" cy="16.500" r="7"/><circle cx="29.500" cy="16.500" r="7"/><path d="M17.500 15.500c1.600-1.400 3.400-1.400 5 0M4 13L9 3.500c.6-1.200 1.800-1.600 3-1.200M36 13L31 3.500c-.6-1.200-1.800-1.600-3-1.200"/></g></svg>
<div style="left:2260.0px;top:17.5px;width:44.0px;height:31.0px;border-radius:9px;background:#eef4f1"></div>
<span class="t " style="left:2267.5px;top:19.5px;font-size:22.00px;line-height:28px;color:#2b7257;font-weight:700;letter-spacing:-0.463px;transform:scaleX(0.9400);transform-origin:0 50%;">AU</span>
<svg width="36" height="28" viewBox="0 0 36 28" style="left:2346px;top:19px"><g fill="none" stroke="#eef4f1" stroke-width="4.200" stroke-linecap="round"><path d="M3 10a21 21 0 0 1 30 0"/><path d="M9 16.500a12.500 12.500 0 0 1 18 0"/></g><path d="M18 27l-5.500-6a8 8 0 0 1 11 0z" fill="#eef4f1"/></svg>
<svg width="40" height="34" viewBox="0 0 40 34" style="left:2418px;top:16px"><circle cx="15" cy="16" r="12.500" fill="none" stroke="#eef4f1" stroke-width="2.800"/><circle cx="14" cy="16" r="4" fill="#eef4f1"/><path d="M21 13.500c1.800-.8 3 .3 3.400 1.500l1.200 4c3.500-.2 9 1.500 10.600 4.500 1.600 3-.2 8-3.200 9.500h-8c-2.500-1.500-6-5.500-7-8-.6-1.700 1.200-2.700 2.500-1.700l2 1.500z" fill="#eef4f1" stroke="#2e7458" stroke-width="1.600"/></svg>
<svg width="52" height="26" viewBox="0 0 52 26" style="left:2489.500px;top:20px"><rect x="1.200" y="1.700" width="44" height="22.600" rx="6" fill="none" stroke="rgba(238,244,241,.55)" stroke-width="2.200"/><rect x="4.600" y="5" width="32.500" height="16" rx="3.200" fill="#eef4f1"/><path d="M47.500 9.500c2 .5 3 2 3 3.500s-1 3-3 3.500z" fill="rgba(238,244,241,.55)"/></svg>
<svg width="30" height="28" viewBox="0 0 30 28" style="left:2584.500px;top:19px"><rect x="1.400" y="1.400" width="25.200" height="10.200" rx="5.100" fill="none" stroke="#eef4f1" stroke-width="2.600"/><circle cx="7.500" cy="6.500" r="3.600" fill="#eef4f1"/><rect x=".5" y="15.500" width="27" height="12" rx="6" fill="#eef4f1"/><circle cx="20.500" cy="21.500" r="3.500" fill="#2e7458"/></svg>
<svg width="2940" height="1912" viewBox="0 0 2940 1912" style="left:0;top:0;pointer-events:none"><g fill="none" stroke="#e9402a" stroke-width="4.600" stroke-linecap="round" stroke-linejoin="round">
<path d="M2807.0 266.0C2812.9 268.6 2833.3 277.6 2842.4 281.6C2851.5 285.6 2856.0 287.4 2861.4 290.0C2866.8 292.6 2871.6 295.3 2874.8 297.4C2878.0 299.5 2881.0 301.1 2880.5 302.5C2880.0 303.9 2876.0 304.6 2871.8 305.6C2867.6 306.6 2864.4 306.8 2855.5 308.6C2846.6 310.5 2834.4 312.1 2818.3 316.7C2802.2 321.3 2779.0 328.6 2758.9 336.0C2738.8 343.4 2723.3 351.0 2697.5 361.3C2671.7 371.6 2636.5 384.6 2604.2 397.8C2571.8 411.0 2537.0 426.0 2503.4 440.7C2469.8 455.4 2436.1 470.4 2402.5 486.0C2368.9 501.6 2335.3 518.0 2301.7 534.0C2268.1 550.0 2232.1 566.9 2200.8 581.8C2169.5 596.7 2128.4 616.5 2113.9 623.4"/><path d="M1966.7 1081.9C1973.9 1083.5 1994.9 1086.4 2009.8 1091.2C2024.7 1096.0 2040.8 1103.6 2056.3 1110.9C2071.8 1118.2 2087.3 1125.8 2102.8 1135.3C2118.3 1144.8 2135.7 1157.4 2149.3 1167.9C2162.9 1178.4 2174.5 1189.2 2184.2 1198.1C2193.9 1207.0 2200.4 1214.0 2207.4 1221.4C2214.4 1228.8 2220.9 1234.9 2226.0 1242.3C2231.1 1249.7 2233.8 1256.7 2237.7 1265.6C2241.6 1274.5 2245.4 1286.1 2249.3 1295.8C2253.2 1305.5 2256.6 1315.2 2260.9 1323.7C2265.2 1332.2 2270.1 1339.5 2274.9 1347.0C2279.8 1354.5 2287.5 1364.8 2290.0 1368.4"/><path d="M2290.0 1368.4C2288.7 1364.1 2284.8 1353.2 2281.9 1342.3C2279.0 1331.4 2274.8 1316.4 2272.6 1302.8C2270.3 1289.2 2269.0 1272.5 2268.4 1260.9C2267.8 1249.3 2268.5 1240.2 2269.0 1233.0C2269.5 1225.8 2271.0 1220.4 2271.4 1217.9" stroke-width="3.800"/>
</g></svg>
<span class="t " style="left:2636.7px;top:248.0px;font-size:64.00px;line-height:83px;color:#e9402a;clip-path:polygon(0 0,36px 0,36px 56px,22.6px 56px,22.6px 83px,15.2px 83px,15.2px 56px,0 56px);">1</span>
<span class="t " style="left:2672.0px;top:248.2px;font-size:64.00px;line-height:83px;color:#e9402a;">.</span>
<span class="t " style="left:2242.5px;top:1122.0px;font-size:64.00px;line-height:83px;color:#e9402a;">2</span>
<span class="t " style="left:2279.5px;top:1122.0px;font-size:64.00px;line-height:83px;color:#e9402a;">.</span>
</div>
</body></html>
